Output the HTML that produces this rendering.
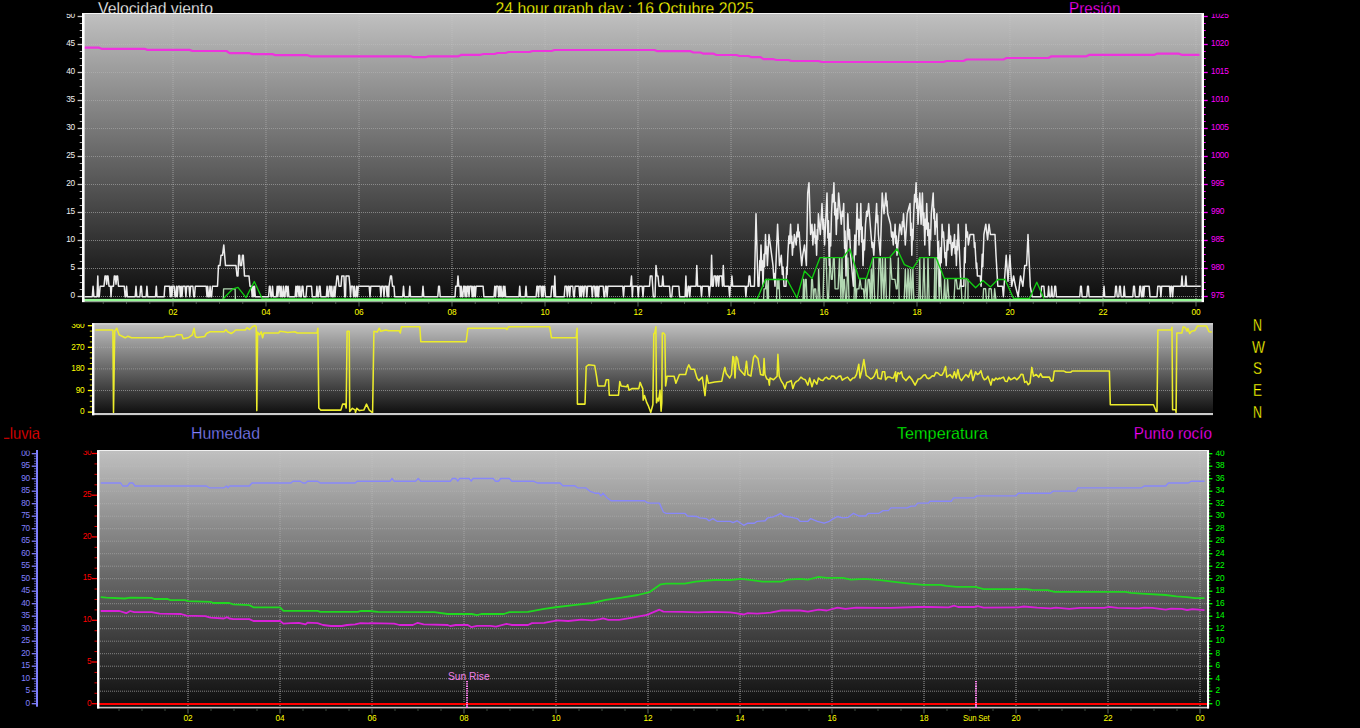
<!DOCTYPE html>
<html lang="es"><head><meta charset="utf-8"><title>24 hour graph</title>
<style>html,body{margin:0;padding:0;background:#000;overflow:hidden}svg{display:block}text{white-space:pre}</style>
</head><body>
<svg width="1360" height="728" viewBox="0 0 1360 728">
<defs>
<linearGradient id="g" x1="0" y1="0" x2="0" y2="1"><stop offset="0" stop-color="#c0c0c0"/><stop offset="1" stop-color="#0c0c0c"/></linearGradient>
<linearGradient id="gv1" gradientUnits="userSpaceOnUse" x1="0" y1="13" x2="0" y2="301"><stop offset="0" stop-color="#dedede" stop-opacity="0.16"/><stop offset="1" stop-color="#dedede" stop-opacity="0.72"/></linearGradient>
<linearGradient id="gv3" gradientUnits="userSpaceOnUse" x1="0" y1="450" x2="0" y2="708"><stop offset="0" stop-color="#dedede" stop-opacity="0.16"/><stop offset="1" stop-color="#dedede" stop-opacity="0.72"/></linearGradient>
</defs>
<rect x="0" y="0" width="1360" height="728" fill="#000" />
<g font-family="'Liberation Sans', sans-serif" font-size="16.6" stroke="#000" stroke-width="0.28">
<text x="98" y="13.6" fill="#ffffff" textLength="115.0" lengthAdjust="spacingAndGlyphs">Velocidad viento</text>
<text x="495.5" y="13.6" fill="#ffff00" textLength="258.3" lengthAdjust="spacingAndGlyphs">24 hour graph day : 16 Octubre 2025</text>
<text x="1069" y="13.6" fill="#ff00ff" textLength="51.5" lengthAdjust="spacingAndGlyphs">Presión</text>
<text x="1.5" y="439" fill="#ff0000" textLength="38.5" lengthAdjust="spacingAndGlyphs">Lluvia</text>
<rect x="0" y="424" width="4.0" height="16.5" fill="#000" />
<rect x="0" y="424" width="5.3" height="13.3" fill="#000" />
<text x="191" y="439" fill="#8080ff" textLength="69.0" lengthAdjust="spacingAndGlyphs">Humedad</text>
<text x="897" y="439" fill="#00ff00" textLength="91.0" lengthAdjust="spacingAndGlyphs">Temperatura</text>
<text x="1133.8" y="439" fill="#ff00ff" textLength="78.2" lengthAdjust="spacingAndGlyphs">Punto rocío</text>
</g>
<g font-family="'Liberation Sans', sans-serif" font-size="8.3" letter-spacing="-0.2">
<text x="75" y="298.35" fill="#f0f0f0" font-size="8.3" text-anchor="end" >0</text>
<text x="75" y="270.35" fill="#f0f0f0" font-size="8.3" text-anchor="end" >5</text>
<text x="75" y="242.35" fill="#f0f0f0" font-size="8.3" text-anchor="end" >10</text>
<text x="75" y="214.35" fill="#f0f0f0" font-size="8.3" text-anchor="end" >15</text>
<text x="75" y="186.35" fill="#f0f0f0" font-size="8.3" text-anchor="end" >20</text>
<text x="75" y="158.35" fill="#f0f0f0" font-size="8.3" text-anchor="end" >25</text>
<text x="75" y="130.35" fill="#f0f0f0" font-size="8.3" text-anchor="end" >30</text>
<text x="75" y="102.35" fill="#f0f0f0" font-size="8.3" text-anchor="end" >35</text>
<text x="75" y="74.35" fill="#f0f0f0" font-size="8.3" text-anchor="end" >40</text>
<text x="75" y="46.35000000000003" fill="#f0f0f0" font-size="8.3" text-anchor="end" >45</text>
<text x="75" y="18.35" fill="#f0f0f0" font-size="8.3" text-anchor="end" >50</text>
<text x="1211" y="298.35" fill="#ff00ff" font-size="8.3" text-anchor="start" >975</text>
<text x="1211" y="270.35" fill="#ff00ff" font-size="8.3" text-anchor="start" >980</text>
<text x="1211" y="242.35" fill="#ff00ff" font-size="8.3" text-anchor="start" >985</text>
<text x="1211" y="214.35" fill="#ff00ff" font-size="8.3" text-anchor="start" >990</text>
<text x="1211" y="186.35" fill="#ff00ff" font-size="8.3" text-anchor="start" >995</text>
<text x="1211" y="158.35" fill="#ff00ff" font-size="8.3" text-anchor="start" >1000</text>
<text x="1211" y="130.35" fill="#ff00ff" font-size="8.3" text-anchor="start" >1005</text>
<text x="1211" y="102.35" fill="#ff00ff" font-size="8.3" text-anchor="start" >1010</text>
<text x="1211" y="74.35" fill="#ff00ff" font-size="8.3" text-anchor="start" >1015</text>
<text x="1211" y="46.35000000000003" fill="#ff00ff" font-size="8.3" text-anchor="start" >1020</text>
<text x="1211" y="18.35" fill="#ff00ff" font-size="8.3" text-anchor="start" >1025</text>
</g>
<rect x="0" y="0" width="82" height="13.8" fill="#000" />
<rect x="1204" y="0" width="156" height="13.8" fill="#000" />
<rect x="82" y="13" width="1122" height="288.5" fill="url(#g)" />
<line x1="77.6" y1="296.5" x2="82" y2="296.5" stroke="#c8c8c8" stroke-width="1.3" />
<line x1="1203" y1="296.5" x2="1207.7" y2="296.5" stroke="#ff00ff" stroke-width="1.3" />
<line x1="79.7" y1="289.5" x2="82" y2="289.5" stroke="#b0b0b0" stroke-width="1" />
<line x1="1203" y1="289.5" x2="1205.7" y2="289.5" stroke="#ff00ff" stroke-width="1" />
<line x1="79.7" y1="282.5" x2="82" y2="282.5" stroke="#b0b0b0" stroke-width="1" />
<line x1="1203" y1="282.5" x2="1205.7" y2="282.5" stroke="#ff00ff" stroke-width="1" />
<line x1="79.7" y1="275.5" x2="82" y2="275.5" stroke="#b0b0b0" stroke-width="1" />
<line x1="1203" y1="275.5" x2="1205.7" y2="275.5" stroke="#ff00ff" stroke-width="1" />
<line x1="77.6" y1="268.5" x2="82" y2="268.5" stroke="#c8c8c8" stroke-width="1.3" />
<line x1="1203" y1="268.5" x2="1207.7" y2="268.5" stroke="#ff00ff" stroke-width="1.3" />
<line x1="79.7" y1="261.5" x2="82" y2="261.5" stroke="#b0b0b0" stroke-width="1" />
<line x1="1203" y1="261.5" x2="1205.7" y2="261.5" stroke="#ff00ff" stroke-width="1" />
<line x1="79.7" y1="254.5" x2="82" y2="254.5" stroke="#b0b0b0" stroke-width="1" />
<line x1="1203" y1="254.5" x2="1205.7" y2="254.5" stroke="#ff00ff" stroke-width="1" />
<line x1="79.7" y1="247.5" x2="82" y2="247.5" stroke="#b0b0b0" stroke-width="1" />
<line x1="1203" y1="247.5" x2="1205.7" y2="247.5" stroke="#ff00ff" stroke-width="1" />
<line x1="77.6" y1="240.5" x2="82" y2="240.5" stroke="#c8c8c8" stroke-width="1.3" />
<line x1="1203" y1="240.5" x2="1207.7" y2="240.5" stroke="#ff00ff" stroke-width="1.3" />
<line x1="79.7" y1="233.5" x2="82" y2="233.5" stroke="#b0b0b0" stroke-width="1" />
<line x1="1203" y1="233.5" x2="1205.7" y2="233.5" stroke="#ff00ff" stroke-width="1" />
<line x1="79.7" y1="226.5" x2="82" y2="226.5" stroke="#b0b0b0" stroke-width="1" />
<line x1="1203" y1="226.5" x2="1205.7" y2="226.5" stroke="#ff00ff" stroke-width="1" />
<line x1="79.7" y1="219.5" x2="82" y2="219.5" stroke="#b0b0b0" stroke-width="1" />
<line x1="1203" y1="219.5" x2="1205.7" y2="219.5" stroke="#ff00ff" stroke-width="1" />
<line x1="77.6" y1="212.5" x2="82" y2="212.5" stroke="#c8c8c8" stroke-width="1.3" />
<line x1="1203" y1="212.5" x2="1207.7" y2="212.5" stroke="#ff00ff" stroke-width="1.3" />
<line x1="79.7" y1="205.5" x2="82" y2="205.5" stroke="#b0b0b0" stroke-width="1" />
<line x1="1203" y1="205.5" x2="1205.7" y2="205.5" stroke="#ff00ff" stroke-width="1" />
<line x1="79.7" y1="198.5" x2="82" y2="198.5" stroke="#b0b0b0" stroke-width="1" />
<line x1="1203" y1="198.5" x2="1205.7" y2="198.5" stroke="#ff00ff" stroke-width="1" />
<line x1="79.7" y1="191.5" x2="82" y2="191.5" stroke="#b0b0b0" stroke-width="1" />
<line x1="1203" y1="191.5" x2="1205.7" y2="191.5" stroke="#ff00ff" stroke-width="1" />
<line x1="77.6" y1="184.5" x2="82" y2="184.5" stroke="#c8c8c8" stroke-width="1.3" />
<line x1="1203" y1="184.5" x2="1207.7" y2="184.5" stroke="#ff00ff" stroke-width="1.3" />
<line x1="79.7" y1="177.5" x2="82" y2="177.5" stroke="#b0b0b0" stroke-width="1" />
<line x1="1203" y1="177.5" x2="1205.7" y2="177.5" stroke="#ff00ff" stroke-width="1" />
<line x1="79.7" y1="170.5" x2="82" y2="170.5" stroke="#b0b0b0" stroke-width="1" />
<line x1="1203" y1="170.5" x2="1205.7" y2="170.5" stroke="#ff00ff" stroke-width="1" />
<line x1="79.7" y1="163.5" x2="82" y2="163.5" stroke="#b0b0b0" stroke-width="1" />
<line x1="1203" y1="163.5" x2="1205.7" y2="163.5" stroke="#ff00ff" stroke-width="1" />
<line x1="77.6" y1="156.5" x2="82" y2="156.5" stroke="#c8c8c8" stroke-width="1.3" />
<line x1="1203" y1="156.5" x2="1207.7" y2="156.5" stroke="#ff00ff" stroke-width="1.3" />
<line x1="79.7" y1="149.5" x2="82" y2="149.5" stroke="#b0b0b0" stroke-width="1" />
<line x1="1203" y1="149.5" x2="1205.7" y2="149.5" stroke="#ff00ff" stroke-width="1" />
<line x1="79.7" y1="142.5" x2="82" y2="142.5" stroke="#b0b0b0" stroke-width="1" />
<line x1="1203" y1="142.5" x2="1205.7" y2="142.5" stroke="#ff00ff" stroke-width="1" />
<line x1="79.7" y1="135.5" x2="82" y2="135.5" stroke="#b0b0b0" stroke-width="1" />
<line x1="1203" y1="135.5" x2="1205.7" y2="135.5" stroke="#ff00ff" stroke-width="1" />
<line x1="77.6" y1="128.5" x2="82" y2="128.5" stroke="#c8c8c8" stroke-width="1.3" />
<line x1="1203" y1="128.5" x2="1207.7" y2="128.5" stroke="#ff00ff" stroke-width="1.3" />
<line x1="79.7" y1="121.5" x2="82" y2="121.5" stroke="#b0b0b0" stroke-width="1" />
<line x1="1203" y1="121.5" x2="1205.7" y2="121.5" stroke="#ff00ff" stroke-width="1" />
<line x1="79.7" y1="114.5" x2="82" y2="114.5" stroke="#b0b0b0" stroke-width="1" />
<line x1="1203" y1="114.5" x2="1205.7" y2="114.5" stroke="#ff00ff" stroke-width="1" />
<line x1="79.7" y1="107.5" x2="82" y2="107.5" stroke="#b0b0b0" stroke-width="1" />
<line x1="1203" y1="107.5" x2="1205.7" y2="107.5" stroke="#ff00ff" stroke-width="1" />
<line x1="77.6" y1="100.5" x2="82" y2="100.5" stroke="#c8c8c8" stroke-width="1.3" />
<line x1="1203" y1="100.5" x2="1207.7" y2="100.5" stroke="#ff00ff" stroke-width="1.3" />
<line x1="79.7" y1="93.5" x2="82" y2="93.5" stroke="#b0b0b0" stroke-width="1" />
<line x1="1203" y1="93.5" x2="1205.7" y2="93.5" stroke="#ff00ff" stroke-width="1" />
<line x1="79.7" y1="86.5" x2="82" y2="86.5" stroke="#b0b0b0" stroke-width="1" />
<line x1="1203" y1="86.5" x2="1205.7" y2="86.5" stroke="#ff00ff" stroke-width="1" />
<line x1="79.7" y1="79.5" x2="82" y2="79.5" stroke="#b0b0b0" stroke-width="1" />
<line x1="1203" y1="79.5" x2="1205.7" y2="79.5" stroke="#ff00ff" stroke-width="1" />
<line x1="77.6" y1="72.5" x2="82" y2="72.5" stroke="#c8c8c8" stroke-width="1.3" />
<line x1="1203" y1="72.5" x2="1207.7" y2="72.5" stroke="#ff00ff" stroke-width="1.3" />
<line x1="79.7" y1="65.50000000000003" x2="82" y2="65.50000000000003" stroke="#b0b0b0" stroke-width="1" />
<line x1="1203" y1="65.50000000000003" x2="1205.7" y2="65.50000000000003" stroke="#ff00ff" stroke-width="1" />
<line x1="79.7" y1="58.50000000000003" x2="82" y2="58.50000000000003" stroke="#b0b0b0" stroke-width="1" />
<line x1="1203" y1="58.50000000000003" x2="1205.7" y2="58.50000000000003" stroke="#ff00ff" stroke-width="1" />
<line x1="79.7" y1="51.50000000000003" x2="82" y2="51.50000000000003" stroke="#b0b0b0" stroke-width="1" />
<line x1="1203" y1="51.50000000000003" x2="1205.7" y2="51.50000000000003" stroke="#ff00ff" stroke-width="1" />
<line x1="77.6" y1="44.50000000000003" x2="82" y2="44.50000000000003" stroke="#c8c8c8" stroke-width="1.3" />
<line x1="1203" y1="44.50000000000003" x2="1207.7" y2="44.50000000000003" stroke="#ff00ff" stroke-width="1.3" />
<line x1="79.7" y1="37.5" x2="82" y2="37.5" stroke="#b0b0b0" stroke-width="1" />
<line x1="1203" y1="37.5" x2="1205.7" y2="37.5" stroke="#ff00ff" stroke-width="1" />
<line x1="79.7" y1="30.5" x2="82" y2="30.5" stroke="#b0b0b0" stroke-width="1" />
<line x1="1203" y1="30.5" x2="1205.7" y2="30.5" stroke="#ff00ff" stroke-width="1" />
<line x1="79.7" y1="23.5" x2="82" y2="23.5" stroke="#b0b0b0" stroke-width="1" />
<line x1="1203" y1="23.5" x2="1205.7" y2="23.5" stroke="#ff00ff" stroke-width="1" />
<line x1="77.6" y1="16.5" x2="82" y2="16.5" stroke="#c8c8c8" stroke-width="1.3" />
<line x1="1203" y1="16.5" x2="1207.7" y2="16.5" stroke="#ff00ff" stroke-width="1.3" />
<line x1="85" y1="296.5" x2="1202" y2="296.5" stroke="#dedede" stroke-width="1" stroke-dasharray="1 1" opacity="0.55"/>
<line x1="85" y1="268.5" x2="1202" y2="268.5" stroke="#dedede" stroke-width="1" stroke-dasharray="1 1" opacity="0.51"/>
<line x1="85" y1="240.5" x2="1202" y2="240.5" stroke="#dedede" stroke-width="1" stroke-dasharray="1 1" opacity="0.47"/>
<line x1="85" y1="212.5" x2="1202" y2="212.5" stroke="#dedede" stroke-width="1" stroke-dasharray="1 1" opacity="0.43"/>
<line x1="85" y1="184.5" x2="1202" y2="184.5" stroke="#dedede" stroke-width="1" stroke-dasharray="1 1" opacity="0.39"/>
<line x1="85" y1="156.5" x2="1202" y2="156.5" stroke="#dedede" stroke-width="1" stroke-dasharray="1 1" opacity="0.35"/>
<line x1="85" y1="128.5" x2="1202" y2="128.5" stroke="#dedede" stroke-width="1" stroke-dasharray="1 1" opacity="0.31"/>
<line x1="85" y1="100.5" x2="1202" y2="100.5" stroke="#dedede" stroke-width="1" stroke-dasharray="1 1" opacity="0.27"/>
<line x1="85" y1="72.5" x2="1202" y2="72.5" stroke="#dedede" stroke-width="1" stroke-dasharray="1 1" opacity="0.23"/>
<line x1="85" y1="44.50000000000003" x2="1202" y2="44.50000000000003" stroke="#dedede" stroke-width="1" stroke-dasharray="1 1" opacity="0.19"/>
<line x1="85" y1="16.5" x2="1202" y2="16.5" stroke="#dedede" stroke-width="1" stroke-dasharray="1 1" opacity="0.15"/>
<line x1="173" y1="14" x2="173" y2="299" stroke="url(#gv1)" stroke-width="1" stroke-dasharray="1 1"/>
<line x1="266" y1="14" x2="266" y2="299" stroke="url(#gv1)" stroke-width="1" stroke-dasharray="1 1"/>
<line x1="359" y1="14" x2="359" y2="299" stroke="url(#gv1)" stroke-width="1" stroke-dasharray="1 1"/>
<line x1="452" y1="14" x2="452" y2="299" stroke="url(#gv1)" stroke-width="1" stroke-dasharray="1 1"/>
<line x1="545" y1="14" x2="545" y2="299" stroke="url(#gv1)" stroke-width="1" stroke-dasharray="1 1"/>
<line x1="638" y1="14" x2="638" y2="299" stroke="url(#gv1)" stroke-width="1" stroke-dasharray="1 1"/>
<line x1="731" y1="14" x2="731" y2="299" stroke="url(#gv1)" stroke-width="1" stroke-dasharray="1 1"/>
<line x1="824" y1="14" x2="824" y2="299" stroke="url(#gv1)" stroke-width="1" stroke-dasharray="1 1"/>
<line x1="917" y1="14" x2="917" y2="299" stroke="url(#gv1)" stroke-width="1" stroke-dasharray="1 1"/>
<line x1="1010" y1="14" x2="1010" y2="299" stroke="url(#gv1)" stroke-width="1" stroke-dasharray="1 1"/>
<line x1="1103" y1="14" x2="1103" y2="299" stroke="url(#gv1)" stroke-width="1" stroke-dasharray="1 1"/>
<line x1="1196" y1="14" x2="1196" y2="299" stroke="url(#gv1)" stroke-width="1" stroke-dasharray="1 1"/>
<g font-family="'Liberation Sans', sans-serif" font-size="8.3" letter-spacing="-0.2">
<text x="173" y="314.6" fill="#ffff00" font-size="8.3" text-anchor="middle" >02</text>
<text x="266" y="314.6" fill="#ffff00" font-size="8.3" text-anchor="middle" >04</text>
<text x="359" y="314.6" fill="#ffff00" font-size="8.3" text-anchor="middle" >06</text>
<text x="452" y="314.6" fill="#ffff00" font-size="8.3" text-anchor="middle" >08</text>
<text x="545" y="314.6" fill="#ffff00" font-size="8.3" text-anchor="middle" >10</text>
<text x="638" y="314.6" fill="#ffff00" font-size="8.3" text-anchor="middle" >12</text>
<text x="731" y="314.6" fill="#ffff00" font-size="8.3" text-anchor="middle" >14</text>
<text x="824" y="314.6" fill="#ffff00" font-size="8.3" text-anchor="middle" >16</text>
<text x="917" y="314.6" fill="#ffff00" font-size="8.3" text-anchor="middle" >18</text>
<text x="1010" y="314.6" fill="#ffff00" font-size="8.3" text-anchor="middle" >20</text>
<text x="1103" y="314.6" fill="#ffff00" font-size="8.3" text-anchor="middle" >22</text>
<text x="1196" y="314.6" fill="#ffff00" font-size="8.3" text-anchor="middle" >00</text>
</g>
<line x1="103.25" y1="302" x2="103.25" y2="304" stroke="#3c483c" stroke-width="1" />
<line x1="126.5" y1="302" x2="126.5" y2="304" stroke="#3c483c" stroke-width="1" />
<line x1="149.75" y1="302" x2="149.75" y2="304" stroke="#3c483c" stroke-width="1" />
<line x1="173.0" y1="302" x2="173.0" y2="306.5" stroke="#5c6c5c" stroke-width="1" />
<line x1="196.25" y1="302" x2="196.25" y2="304" stroke="#3c483c" stroke-width="1" />
<line x1="219.5" y1="302" x2="219.5" y2="304" stroke="#3c483c" stroke-width="1" />
<line x1="242.75" y1="302" x2="242.75" y2="304" stroke="#3c483c" stroke-width="1" />
<line x1="266.0" y1="302" x2="266.0" y2="306.5" stroke="#5c6c5c" stroke-width="1" />
<line x1="289.25" y1="302" x2="289.25" y2="304" stroke="#3c483c" stroke-width="1" />
<line x1="312.5" y1="302" x2="312.5" y2="304" stroke="#3c483c" stroke-width="1" />
<line x1="335.75" y1="302" x2="335.75" y2="304" stroke="#3c483c" stroke-width="1" />
<line x1="359.0" y1="302" x2="359.0" y2="306.5" stroke="#5c6c5c" stroke-width="1" />
<line x1="382.25" y1="302" x2="382.25" y2="304" stroke="#3c483c" stroke-width="1" />
<line x1="405.5" y1="302" x2="405.5" y2="304" stroke="#3c483c" stroke-width="1" />
<line x1="428.75" y1="302" x2="428.75" y2="304" stroke="#3c483c" stroke-width="1" />
<line x1="452.0" y1="302" x2="452.0" y2="306.5" stroke="#5c6c5c" stroke-width="1" />
<line x1="475.25" y1="302" x2="475.25" y2="304" stroke="#3c483c" stroke-width="1" />
<line x1="498.5" y1="302" x2="498.5" y2="304" stroke="#3c483c" stroke-width="1" />
<line x1="521.75" y1="302" x2="521.75" y2="304" stroke="#3c483c" stroke-width="1" />
<line x1="545.0" y1="302" x2="545.0" y2="306.5" stroke="#5c6c5c" stroke-width="1" />
<line x1="568.25" y1="302" x2="568.25" y2="304" stroke="#3c483c" stroke-width="1" />
<line x1="591.5" y1="302" x2="591.5" y2="304" stroke="#3c483c" stroke-width="1" />
<line x1="614.75" y1="302" x2="614.75" y2="304" stroke="#3c483c" stroke-width="1" />
<line x1="638.0" y1="302" x2="638.0" y2="306.5" stroke="#5c6c5c" stroke-width="1" />
<line x1="661.25" y1="302" x2="661.25" y2="304" stroke="#3c483c" stroke-width="1" />
<line x1="684.5" y1="302" x2="684.5" y2="304" stroke="#3c483c" stroke-width="1" />
<line x1="707.75" y1="302" x2="707.75" y2="304" stroke="#3c483c" stroke-width="1" />
<line x1="731.0" y1="302" x2="731.0" y2="306.5" stroke="#5c6c5c" stroke-width="1" />
<line x1="754.25" y1="302" x2="754.25" y2="304" stroke="#3c483c" stroke-width="1" />
<line x1="777.5" y1="302" x2="777.5" y2="304" stroke="#3c483c" stroke-width="1" />
<line x1="800.75" y1="302" x2="800.75" y2="304" stroke="#3c483c" stroke-width="1" />
<line x1="824.0" y1="302" x2="824.0" y2="306.5" stroke="#5c6c5c" stroke-width="1" />
<line x1="847.25" y1="302" x2="847.25" y2="304" stroke="#3c483c" stroke-width="1" />
<line x1="870.5" y1="302" x2="870.5" y2="304" stroke="#3c483c" stroke-width="1" />
<line x1="893.75" y1="302" x2="893.75" y2="304" stroke="#3c483c" stroke-width="1" />
<line x1="917.0" y1="302" x2="917.0" y2="306.5" stroke="#5c6c5c" stroke-width="1" />
<line x1="940.25" y1="302" x2="940.25" y2="304" stroke="#3c483c" stroke-width="1" />
<line x1="963.5" y1="302" x2="963.5" y2="304" stroke="#3c483c" stroke-width="1" />
<line x1="986.75" y1="302" x2="986.75" y2="304" stroke="#3c483c" stroke-width="1" />
<line x1="1010.0" y1="302" x2="1010.0" y2="306.5" stroke="#5c6c5c" stroke-width="1" />
<line x1="1033.25" y1="302" x2="1033.25" y2="304" stroke="#3c483c" stroke-width="1" />
<line x1="1056.5" y1="302" x2="1056.5" y2="304" stroke="#3c483c" stroke-width="1" />
<line x1="1079.75" y1="302" x2="1079.75" y2="304" stroke="#3c483c" stroke-width="1" />
<line x1="1103.0" y1="302" x2="1103.0" y2="306.5" stroke="#5c6c5c" stroke-width="1" />
<line x1="1126.25" y1="302" x2="1126.25" y2="304" stroke="#3c483c" stroke-width="1" />
<line x1="1149.5" y1="302" x2="1149.5" y2="304" stroke="#3c483c" stroke-width="1" />
<line x1="1172.75" y1="302" x2="1172.75" y2="304" stroke="#3c483c" stroke-width="1" />
<line x1="1196.0" y1="302" x2="1196.0" y2="306.5" stroke="#5c6c5c" stroke-width="1" />
<polyline points="84.0,47.6 98.5,47.6 101.5,48.8 144.5,48.8 147.5,49.9 189.5,49.9 192.5,51.0 226.5,51.0 229.5,53.2 249.5,53.2 252.5,54.1 272.5,54.1 275.5,55.2 307.5,55.2 310.5,56.3 410.5,56.3 413.5,57.2 425.5,57.2 428.5,56.3 458.5,56.3 461.5,54.8 480.5,54.8 483.5,54.0 494.5,54.0 497.5,53.0 505.5,53.0 508.5,52.0 529.5,52.0 532.5,51.0 551.5,51.0 554.5,50.0 654.5,50.0 657.5,51.2 690.5,51.2 693.5,52.5 700.5,52.5 703.5,53.7 713.5,53.7 716.5,55.0 736.5,55.0 739.5,56.0 748.5,56.0 751.5,57.2 760.5,57.2 763.5,59.2 773.5,59.2 776.5,60.0 788.5,60.0 791.5,61.0 818.5,61.0 821.5,62.0 943.5,62.0 946.5,61.0 963.5,61.0 966.5,59.5 1003.5,59.5 1006.5,58.0 1048.5,58.0 1051.5,56.3 1086.5,56.3 1089.5,54.8 1154.5,54.8 1157.5,53.6 1178.5,53.6 1181.5,54.8 1199.5,54.8" fill="none" stroke="#ee33dd" stroke-width="2.2" stroke-linejoin="round" />
<polyline points="223.3,300.0 223.6,288.8 235.1,288.8 235.4,300.0" fill="none" stroke="#c0e8c0" stroke-width="1.35" stroke-linejoin="round" opacity="0.92"/>
<polyline points="763.5,300.0 764.1,288.8 765.5,288.8 766.4,279.3 767.3,300.0 768.4,279.3 768.5,300.0" fill="none" stroke="#c0e8c0" stroke-width="1.35" stroke-linejoin="round" opacity="0.92"/>
<polyline points="776.5,300.0 777.1,279.3 778.0,288.8 778.9,279.3 779.8,300.0" fill="none" stroke="#c0e8c0" stroke-width="1.35" stroke-linejoin="round" opacity="0.92"/>
<polyline points="803.0,300.0 803.6,279.3 804.5,300.0 805.4,279.3 806.2,279.3 807.0,300.0" fill="none" stroke="#c0e8c0" stroke-width="1.35" stroke-linejoin="round" opacity="0.92"/>
<polyline points="811.0,300.0 811.6,279.3 812.4,279.3 813.5,300.0 814.4,288.8 815.6,288.8 816.5,300.0" fill="none" stroke="#c0e8c0" stroke-width="1.35" stroke-linejoin="round" opacity="0.92"/>
<polyline points="818.0,300.0 818.6,269.5 820.0,300.0 823.0,300.0 824.1,258.0 826.1,258.0 827.5,300.0 828.5,300.0 829.9,258.0 831.3,279.3 832.3,279.3 833.4,258.0 834.2,258.0 835.1,288.8 838.1,288.8 839.5,258.0 840.9,300.0 842.0,258.0 842.9,300.0 844.0,279.3 844.4,279.3 845.5,300.0 846.5,300.0 847.9,258.0 849.0,300.0 854.0,300.0 854.9,269.5 856.0,300.0 856.9,288.8 858.9,288.8 860.0,279.3 861.4,288.8 863.4,288.8 864.5,300.0 865.6,279.3 867.0,300.0 868.1,279.3 869.3,279.3 870.4,300.0 871.3,269.5 872.2,300.0 873.3,258.0 874.7,300.0 877.7,300.0 879.1,258.0 880.3,258.0 881.4,300.0 882.5,258.0 883.9,300.0 885.3,258.0 886.4,300.0 889.4,300.0 890.5,258.0 891.9,279.3 894.9,279.3 896.3,288.8 897.2,288.8 898.3,258.0 899.2,300.0 904.2,300.0 905.3,269.5 906.7,300.0 908.1,269.5 909.2,300.0 910.6,269.5 911.5,300.0 912.9,269.5 913.8,300.0 918.8,300.0 919.7,258.0 920.6,300.0 922.6,300.0 924.0,258.0 925.1,300.0 927.1,300.0 928.0,258.0 929.1,300.0 934.1,300.0 935.0,258.0 935.0,300.0" fill="none" stroke="#c0e8c0" stroke-width="1.35" stroke-linejoin="round" opacity="0.92"/>
<polyline points="936.0,300.0 936.6,258.0 937.8,258.0 939.2,300.0 940.3,269.5 941.7,300.0 943.7,300.0 944.6,279.3 945.5,300.0 946.5,300.0 947.6,279.3 949.0,300.0 954.0,300.0 955.1,279.3 956.3,279.3 957.4,288.8 959.4,288.8 960.8,279.3 961.9,300.0 964.9,300.0 966.0,279.3 968.0,279.3 968.0,300.0" fill="none" stroke="#c0e8c0" stroke-width="1.35" stroke-linejoin="round" opacity="0.92"/>
<polyline points="983.0,300.0 983.6,288.7 985.6,288.7 986.5,300.0 986.7,300.0" fill="none" stroke="#c0e8c0" stroke-width="1.35" stroke-linejoin="round" opacity="0.92"/>
<polyline points="988.5,300.0 989.1,288.7 990.3,288.7 991.2,288.8 992.0,300.0" fill="none" stroke="#c0e8c0" stroke-width="1.35" stroke-linejoin="round" opacity="0.92"/>
<polyline points="994.0,300.0 994.6,288.7 996.0,300.0" fill="none" stroke="#c0e8c0" stroke-width="1.35" stroke-linejoin="round" opacity="0.92"/>
<polyline points="84.5,296.7 85.3,296.7 86.1,296.7 86.8,296.7 87.6,296.7 88.4,296.7 89.2,296.7 90.0,296.7 90.7,296.7 91.5,296.7 92.3,296.7 93.1,286.3 93.9,296.7 94.6,296.7 95.4,296.7 96.2,296.7 97.0,296.7 97.8,276.0 98.5,296.7 99.3,296.7 100.1,286.3 100.9,286.3 101.7,286.3 102.4,286.3 103.2,286.3 104.0,286.3 105.0,276.0 106.0,276.0 106.7,284.3 107.3,276.0 108.0,276.0 109.0,286.3 110.5,286.3 111.0,296.7 111.7,286.3 113.5,286.3 114.3,276.0 115.2,276.0 116.0,284.3 116.8,276.0 117.6,276.0 118.5,286.3 121.5,286.3 121.9,286.3 122.7,286.3 123.5,286.3 124.3,286.3 125.1,296.7 125.8,296.7 126.6,286.3 127.4,296.7 128.2,296.7 129.0,296.7 129.7,296.7 130.5,296.7 131.3,296.7 132.1,296.7 132.9,296.7 133.6,296.7 134.4,296.7 135.2,296.7 136.0,286.3 136.8,296.7 137.5,296.7 138.3,296.7 139.1,296.7 139.9,296.7 140.7,286.3 141.4,286.3 142.2,296.7 143.0,296.7 143.8,296.7 144.6,296.7 145.3,296.7 146.1,296.7 146.9,286.3 147.7,296.7 148.5,296.7 149.2,296.7 150.0,296.7 150.8,296.7 151.6,296.7 152.4,296.7 153.1,296.7 153.9,296.7 154.7,296.7 155.5,296.7 156.3,286.3 157.0,296.7 157.8,296.7 158.6,296.7 159.4,296.7 160.2,296.7 160.9,296.7 161.7,296.7 162.5,296.7 163.3,296.7 164.1,296.7 164.8,286.3 165.6,286.3 166.4,286.3 167.2,286.3 168.0,286.3 168.7,286.3 169.5,286.3 170.3,296.7 171.1,286.3 171.9,296.7 172.6,286.3 173.4,286.3 174.2,286.3 175.0,296.7 175.8,296.7 176.5,286.3 177.3,296.7 178.1,286.3 178.9,286.3 179.7,286.3 180.4,296.7 181.2,286.3 182.0,296.7 182.8,286.3 183.6,286.3 184.3,286.3 185.1,286.3 185.9,296.7 186.7,286.3 187.5,286.3 188.2,286.3 189.0,286.3 189.8,296.7 190.6,286.3 191.4,286.3 192.1,286.3 192.9,286.3 193.7,296.7 194.5,296.7 195.3,286.3 196.0,286.3 196.8,286.3 197.6,286.3 198.4,286.3 199.2,286.3 199.9,286.3 200.7,286.3 201.5,286.3 202.3,286.3 203.1,286.3 203.8,286.3 204.6,286.3 205.4,286.3 206.2,286.3 207.0,296.7 207.7,286.3 208.5,296.7 209.3,296.7 210.1,286.3 210.9,296.7 211.6,296.7 212.4,286.3 213.2,286.3 214.0,286.3 214.8,286.3 215.5,286.3 216.3,286.3 217.1,286.3 217.5,286.3 218.5,265.6 220.0,265.6 221.0,255.3 222.5,255.3 223.8,244.9 225.5,265.6 236.0,265.6 237.0,276.0 238.0,276.0 238.8,255.3 239.6,255.3 240.3,265.6 241.5,265.6 242.5,255.3 243.3,255.3 244.5,276.0 249.0,276.0 250.0,286.3 251.0,286.3 251.4,286.3 252.2,296.7 253.0,286.3 253.8,296.7 254.5,286.3 255.3,296.7 256.1,296.7 256.9,296.7 257.7,296.7 258.4,296.7 259.2,296.7 260.0,296.7 260.8,296.7 261.6,296.7 262.3,296.7 263.1,296.7 263.9,296.7 264.7,296.7 265.5,296.7 266.2,296.7 267.0,296.7 267.8,296.7 268.6,296.7 269.4,286.3 270.1,286.3 270.9,296.7 271.7,296.7 272.5,286.3 273.3,296.7 274.0,296.7 274.8,296.7 275.6,296.7 276.4,296.7 277.2,286.3 277.9,296.7 278.7,286.3 279.5,286.3 280.3,296.7 281.1,286.3 281.8,296.7 282.6,296.7 283.4,286.3 284.2,296.7 285.0,296.7 285.7,286.3 286.5,286.3 287.3,296.7 288.1,286.3 288.9,296.7 289.6,296.7 290.4,296.7 291.2,296.7 292.0,296.7 292.8,296.7 293.5,296.7 294.3,296.7 295.1,296.7 295.9,286.3 296.7,296.7 297.4,286.3 298.2,286.3 299.0,296.7 299.8,286.3 300.6,296.7 301.3,296.7 302.1,286.3 302.9,286.3 303.7,296.7 304.5,296.7 305.2,296.7 306.0,296.7 306.8,286.3 307.6,286.3 308.4,286.3 309.1,286.3 309.9,286.3 310.7,286.3 311.5,286.3 312.3,296.7 313.0,296.7 313.8,296.7 314.6,296.7 315.4,296.7 316.2,296.7 316.9,286.3 317.7,296.7 318.5,296.7 319.3,286.3 320.1,286.3 320.8,296.7 321.6,296.7 322.4,296.7 323.2,296.7 324.0,296.7 324.7,296.7 325.5,296.7 326.3,296.7 327.1,286.3 327.9,296.7 328.6,296.7 329.4,286.3 330.2,286.3 331.0,296.7 331.8,286.3 332.5,296.7 333.3,296.7 334.1,286.3 334.9,296.7 335.7,286.3 336.0,286.3 337.0,276.0 338.0,276.0 339.0,286.3 341.0,286.3 341.8,276.0 344.0,276.0 344.7,296.7 345.5,296.7 346.0,276.0 349.0,276.0 350.0,286.3 350.5,296.7 351.3,286.3 352.0,286.3 352.8,286.3 353.6,296.7 354.4,286.3 355.2,296.7 355.9,296.7 356.7,286.3 357.5,296.7 358.3,286.3 359.1,286.3 359.8,286.3 360.6,286.3 361.4,286.3 362.2,286.3 363.0,286.3 363.7,286.3 364.5,286.3 365.3,286.3 366.1,286.3 366.9,286.3 367.6,286.3 368.4,286.3 369.2,286.3 370.0,296.7 370.8,286.3 371.5,286.3 372.3,286.3 373.1,286.3 373.9,286.3 374.7,286.3 375.4,286.3 376.2,286.3 377.0,286.3 377.8,286.3 378.6,286.3 379.3,286.3 380.1,286.3 380.9,296.7 381.7,286.3 382.5,286.3 383.2,286.3 384.0,296.7 384.8,286.3 385.6,286.3 386.4,286.3 387.1,296.7 387.9,286.3 388.7,296.7 389.0,286.3 390.5,276.0 391.5,276.0 392.5,286.3 394.0,286.3 394.7,296.7 394.9,296.7 395.7,296.7 396.5,296.7 397.3,296.7 398.1,296.7 398.8,296.7 399.6,296.7 400.4,296.7 401.2,296.7 402.0,296.7 402.7,296.7 403.5,286.3 404.3,296.7 405.1,296.7 405.9,296.7 406.6,296.7 407.4,296.7 408.2,296.7 409.0,296.7 409.8,286.3 410.5,296.7 411.3,296.7 412.1,296.7 412.9,296.7 413.7,296.7 414.4,296.7 415.2,296.7 416.0,296.7 416.8,296.7 417.6,296.7 418.3,296.7 419.1,296.7 419.9,296.7 420.7,296.7 421.5,296.7 422.2,296.7 423.0,286.3 423.8,296.7 424.6,296.7 425.4,296.7 426.1,296.7 426.9,296.7 427.7,296.7 428.5,296.7 429.3,296.7 430.0,296.7 430.8,296.7 431.6,296.7 432.4,296.7 433.2,296.7 433.9,296.7 434.7,296.7 435.5,296.7 436.3,296.7 437.1,296.7 437.8,296.7 438.6,286.3 439.4,286.3 440.2,296.7 441.0,296.7 441.7,296.7 442.5,296.7 443.3,296.7 444.1,296.7 444.9,296.7 445.6,296.7 446.4,296.7 447.2,296.7 448.0,296.7 448.8,296.7 449.5,296.7 450.3,296.7 451.1,296.7 451.9,296.7 452.7,296.7 453.4,296.7 454.2,296.7 455.0,296.7 455.0,296.7 455.7,286.3 457.3,286.3 458.0,276.0 458.8,286.3 460.0,286.3 460.5,296.7 461.2,286.3 462.0,296.7 462.8,296.7 463.6,286.3 464.4,286.3 465.1,296.7 465.9,286.3 466.7,296.7 467.5,286.3 468.3,286.3 469.0,296.7 469.8,286.3 470.6,286.3 471.4,286.3 472.2,296.7 472.9,286.3 473.7,296.7 474.5,286.3 475.3,296.7 476.1,286.3 476.8,286.3 477.6,286.3 478.4,286.3 479.2,286.3 480.0,286.3 480.7,286.3 481.5,286.3 482.3,286.3 483.1,286.3 483.9,296.7 484.6,296.7 485.4,296.7 486.2,296.7 487.0,296.7 487.8,296.7 488.5,296.7 489.3,296.7 490.1,296.7 490.9,296.7 491.7,296.7 492.4,296.7 493.2,296.7 494.0,296.7 494.8,286.3 495.6,296.7 496.3,286.3 497.1,286.3 497.9,286.3 498.7,296.7 499.5,286.3 500.2,296.7 501.0,286.3 501.8,296.7 502.6,296.7 503.4,286.3 504.1,296.7 504.9,286.3 505.7,296.7 506.5,296.7 507.3,296.7 508.0,296.7 508.8,296.7 509.6,296.7 510.4,296.7 511.2,296.7 511.9,296.7 512.7,296.7 513.5,296.7 514.3,296.7 515.1,296.7 515.8,296.7 516.6,296.7 517.4,296.7 518.2,296.7 519.0,296.7 519.7,286.3 520.5,296.7 521.3,296.7 522.1,296.7 522.9,296.7 523.6,296.7 524.4,296.7 525.2,296.7 526.0,286.3 526.8,296.7 527.5,296.7 528.3,296.7 529.1,296.7 529.9,296.7 530.7,296.7 531.4,296.7 532.2,296.7 533.0,296.7 533.8,296.7 534.6,296.7 535.3,296.7 536.1,296.7 536.9,286.3 537.7,286.3 538.5,296.7 539.2,286.3 540.0,286.3 540.8,286.3 541.6,296.7 542.4,286.3 543.1,296.7 543.9,286.3 544.7,286.3 545.5,296.7 546.3,296.7 547.0,296.7 547.8,296.7 548.6,296.7 549.4,296.7 550.2,296.7 550.9,296.7 551.7,286.3 552.5,286.3 553.3,286.3 554.1,296.7 554.8,276.0 555.6,296.7 556.4,296.7 557.2,296.7 558.0,296.7 558.7,296.7 559.5,296.7 560.3,296.7 561.1,296.7 561.9,296.7 562.6,296.7 563.4,296.7 564.2,296.7 565.0,286.3 565.8,286.3 566.5,286.3 567.3,296.7 568.1,286.3 568.9,286.3 569.7,296.7 570.4,286.3 571.2,286.3 572.0,286.3 572.8,286.3 573.6,296.7 574.3,296.7 575.1,286.3 575.9,286.3 576.7,286.3 577.5,286.3 578.2,286.3 579.0,286.3 579.8,296.7 580.6,286.3 581.4,296.7 582.1,286.3 582.9,286.3 583.7,296.7 584.5,286.3 585.3,286.3 586.0,286.3 586.8,296.7 587.6,286.3 588.4,286.3 589.2,286.3 589.9,286.3 590.7,286.3 591.5,286.3 592.3,296.7 593.1,286.3 593.8,286.3 594.6,286.3 595.4,296.7 596.2,286.3 597.0,296.7 597.7,286.3 598.5,296.7 599.3,286.3 600.1,286.3 600.9,286.3 601.6,286.3 602.4,286.3 603.2,286.3 604.0,296.7 604.8,296.7 605.5,286.3 606.3,286.3 607.1,296.7 607.9,286.3 608.7,286.3 609.4,286.3 610.2,286.3 611.0,286.3 611.8,286.3 612.6,286.3 613.3,286.3 614.1,286.3 614.9,286.3 615.7,286.3 616.5,286.3 617.2,286.3 618.0,286.3 618.8,286.3 619.6,286.3 620.4,286.3 621.1,286.3 621.9,286.3 622.7,286.3 623.5,296.7 624.3,286.3 625.0,286.3 625.8,286.3 626.6,286.3 627.4,286.3 628.2,286.3 628.9,286.3 629.7,286.3 630.5,286.3 630.5,286.3 631.5,276.0 632.3,296.7 633.0,286.3 633.6,286.3 634.4,286.3 635.2,286.3 636.0,286.3 636.7,286.3 637.5,286.3 638.3,296.7 639.1,286.3 639.9,286.3 640.6,286.3 641.4,286.3 642.2,286.3 643.0,296.7 643.8,286.3 644.5,286.3 645.3,286.3 646.1,286.3 646.9,286.3 647.7,286.3 648.4,286.3 649.2,286.3 649.5,286.3 650.3,276.0 652.0,276.0 653.3,296.7 655.0,296.7 656.0,265.6 657.0,276.0 658.0,276.0 659.0,286.3 662.0,286.3 662.8,276.0 663.6,286.3 664.0,286.3 664.8,286.3 665.6,286.3 666.4,286.3 667.2,286.3 667.9,286.3 668.7,286.3 669.5,286.3 670.3,296.7 671.1,296.7 671.8,296.7 672.6,286.3 673.4,286.3 674.2,286.3 675.0,286.3 675.7,286.3 676.5,286.3 677.3,286.3 678.1,286.3 678.9,286.3 679.6,296.7 680.4,296.7 681.2,296.7 682.0,296.7 682.8,296.7 683.5,296.7 684.3,296.7 685.1,296.7 685.9,276.0 686.7,296.7 687.4,296.7 688.2,286.3 689.0,286.3 689.8,296.7 690.6,286.3 691.3,286.3 692.1,286.3 692.9,286.3 693.7,286.3 694.5,286.3 695.2,286.3 696.0,286.3 696.8,265.6 697.6,286.3 698.4,286.3 699.1,286.3 699.9,286.3 700.7,286.3 701.5,296.7 702.3,286.3 703.0,286.3 703.8,286.3 704.6,286.3 705.4,286.3 706.2,286.3 706.9,286.3 707.7,286.3 708.5,286.3 709.3,296.7 710.1,286.3 710.8,286.3 711.6,255.3 712.4,286.3 713.2,286.3 714.0,276.0 714.7,276.0 715.5,276.0 716.3,286.3 717.1,276.0 717.9,276.0 718.6,286.3 719.4,276.0 720.2,276.0 721.0,276.0 721.8,276.0 722.5,286.3 723.3,265.6 724.1,286.3 724.9,286.3 725.7,286.3 726.4,286.3 727.2,286.3 728.0,286.3 728.8,286.3 729.6,296.7 730.3,286.3 731.1,286.3 731.9,276.0 732.7,286.3 733.5,286.3 734.2,286.3 735.0,286.3 735.8,286.3 736.6,286.3 737.4,286.3 738.1,286.3 738.9,286.3 739.7,286.3 740.5,286.3 741.3,286.3 742.0,286.3 742.8,286.3 743.6,286.3 744.4,286.3 745.2,286.3 745.9,296.7 746.7,286.3 747.5,286.3 748.3,286.3 749.1,276.0 749.8,276.0 750.6,286.3 751.4,286.3 752.2,286.3 753.0,286.3 753.7,286.3 754.4,286.3 756.0,213.8 758.0,286.3 759.0,286.3 759.8,260.6 760.2,270.6 761.0,244.9 761.8,270.6 762.2,260.6 763.0,286.3 764.0,254.2 764.5,266.7 765.5,234.5 766.2,253.8 766.7,246.4 767.4,265.6 769.0,234.5 771.0,250.1 773.0,265.6 773.8,278.5 774.2,273.5 775.0,286.3 777.6,224.2 779.5,265.6 781.3,255.3 782.3,274.5 783.0,267.1 784.0,286.3 786.0,286.3 786.7,267.1 787.1,274.5 787.8,255.3 788.9,236.0 789.5,243.4 790.6,224.2 791.3,243.4 791.7,236.0 792.4,255.3 793.1,242.4 793.6,247.4 794.3,234.5 796.2,244.9 796.9,232.1 797.3,237.0 798.0,224.2 798.8,237.0 799.2,232.1 800.0,244.9 801.7,265.6 802.7,255.3 804.5,244.9 806.4,265.6 807.7,193.1 809.0,182.7 810.6,234.5 812.0,224.2 812.9,244.9 813.6,232.1 814.0,237.0 814.7,224.2 815.4,243.4 815.9,236.0 816.6,255.3 817.3,229.6 817.7,239.5 818.4,213.8 820.3,234.5 822.0,203.5 823.0,229.2 823.6,219.2 824.6,244.9 827.0,193.1 827.9,238.1 828.4,220.7 829.3,265.6 830.1,233.5 830.7,245.9 831.5,213.8 832.4,194.6 833.0,202.0 833.9,182.7 834.8,214.9 835.4,202.4 836.3,234.5 837.2,208.8 837.7,218.8 838.6,193.1 841.3,224.2 842.2,211.3 842.8,216.3 843.7,203.5 844.6,248.4 845.1,231.0 846.0,276.0 847.8,213.8 848.9,239.5 849.5,229.6 850.6,255.3 853.4,286.3 854.8,235.0 855.7,254.8 857.1,203.5 857.8,229.2 858.3,219.2 859.0,244.9 859.7,219.2 860.1,229.2 860.8,203.5 861.6,242.0 862.2,227.1 863.0,265.6 864.0,239.9 864.5,249.9 865.5,224.2 866.7,211.3 867.4,216.3 868.6,203.5 871.0,234.5 872.1,247.4 872.7,242.4 873.8,255.3 876.6,203.5 877.3,222.7 877.7,215.3 878.4,234.5 880.3,255.3 882.2,193.1 884.0,213.8 885.9,193.1 886.6,205.9 887.0,201.0 887.7,213.8 890.5,224.2 891.6,237.0 892.2,232.1 893.3,244.9 894.0,232.1 894.4,237.0 895.1,224.2 895.8,243.4 896.3,236.0 897.0,255.3 899.8,224.2 901.6,234.5 902.3,221.7 902.8,226.7 903.5,213.8 905.3,244.9 907.2,213.8 910.0,203.5 910.7,235.6 911.1,223.1 911.8,255.3 912.5,229.6 913.0,239.5 913.7,213.8 914.6,194.6 915.2,202.0 916.1,182.7 916.8,208.4 917.3,198.5 918.0,224.2 919.8,193.1 921.1,224.2 922.4,193.1 923.3,225.2 923.9,212.8 924.8,244.9 925.5,219.2 926.0,229.2 926.7,203.5 927.8,235.6 928.4,223.1 929.5,255.3 930.2,229.6 930.6,239.5 931.3,213.8 933.2,193.1 933.9,218.8 934.3,208.8 935.0,234.5 935.7,221.7 936.2,226.7 936.9,213.8 938.0,258.8 938.6,241.4 939.7,286.3 940.6,247.8 941.2,262.7 942.1,224.2 942.9,237.0 943.5,232.1 944.3,244.9 945.0,257.7 945.5,252.8 946.2,265.6 947.2,239.9 947.9,249.9 948.9,224.2 950.0,243.4 950.6,236.0 951.7,255.3 952.8,242.4 953.4,247.4 954.5,234.5 955.2,253.8 955.7,246.4 956.4,265.6 957.1,239.9 957.5,249.9 958.2,224.2 961.0,286.3 963.8,286.3 964.6,247.8 965.2,262.7 966.0,224.2 966.9,237.0 967.5,232.1 968.4,244.9 970.0,234.5 973.7,234.5 974.4,247.4 974.9,242.4 975.6,255.3 976.3,268.1 976.7,263.1 977.4,276.0 980.2,276.0 981.1,286.3 982.2,254.2 982.8,266.7 983.9,234.5 985.8,224.2 987.6,239.7 989.0,224.2 990.4,234.5 995.0,234.5 996.0,255.3 997.8,286.3 1002.5,286.3 1003.4,296.7 1006.2,255.3 1008.0,281.2 1009.9,255.3 1011.7,286.3 1013.6,276.0 1015.5,286.3 1018.2,296.7 1020.5,276.0 1022.9,286.3 1024.7,265.6 1026.6,265.6 1028.0,234.5 1030.3,286.3 1032.2,296.7 1033.0,296.7 1033.8,296.7 1034.5,296.7 1035.3,296.7 1036.1,296.7 1036.9,296.7 1037.7,296.7 1038.4,296.7 1039.2,296.7 1040.0,296.7 1040.8,296.7 1041.6,286.3 1042.3,286.3 1043.1,286.3 1043.9,286.3 1044.7,296.7 1045.5,296.7 1046.2,296.7 1047.0,296.7 1047.8,296.7 1048.6,286.3 1049.4,296.7 1050.1,296.7 1050.9,296.7 1051.7,286.3 1052.5,296.7 1053.3,296.7 1054.0,296.7 1054.8,286.3 1055.6,286.3 1056.4,296.7 1057.2,296.7 1057.9,296.7 1058.7,296.7 1059.5,296.7 1060.3,296.7 1061.1,296.7 1061.8,296.7 1062.6,296.7 1063.4,296.7 1064.2,296.7 1065.0,296.7 1065.7,296.7 1066.5,296.7 1067.3,296.7 1068.1,296.7 1068.9,296.7 1069.6,296.7 1070.4,296.7 1071.2,296.7 1072.0,296.7 1072.8,296.7 1073.5,296.7 1074.3,296.7 1075.1,296.7 1075.9,296.7 1076.7,296.7 1077.4,296.7 1078.2,296.7 1079.0,296.7 1079.8,296.7 1080.6,286.3 1081.3,286.3 1082.1,296.7 1082.9,296.7 1083.7,296.7 1084.5,296.7 1085.2,296.7 1086.0,296.7 1086.8,296.7 1087.6,286.3 1088.4,286.3 1089.1,296.7 1089.9,296.7 1090.7,296.7 1091.5,296.7 1092.3,296.7 1093.0,296.7 1093.8,296.7 1094.6,296.7 1095.4,296.7 1096.2,296.7 1096.9,296.7 1097.7,296.7 1098.5,296.7 1099.3,296.7 1100.1,296.7 1100.8,296.7 1101.6,296.7 1102.4,296.7 1103.2,296.7 1104.0,286.3 1104.7,296.7 1105.5,296.7 1106.3,296.7 1107.1,296.7 1107.9,296.7 1108.6,296.7 1109.4,296.7 1110.2,296.7 1111.0,296.7 1111.8,296.7 1112.5,296.7 1113.3,296.7 1114.1,296.7 1114.9,296.7 1115.7,286.3 1116.4,286.3 1117.2,296.7 1118.0,296.7 1118.8,296.7 1119.6,286.3 1120.3,286.3 1121.1,296.7 1121.9,296.7 1122.7,296.7 1123.5,296.7 1124.2,286.3 1125.0,296.7 1125.8,296.7 1126.6,296.7 1127.4,296.7 1128.1,296.7 1128.9,296.7 1129.7,296.7 1130.5,296.7 1131.3,296.7 1132.0,296.7 1132.8,296.7 1133.6,286.3 1134.4,286.3 1135.2,296.7 1135.9,296.7 1136.7,296.7 1137.5,296.7 1138.3,296.7 1139.1,296.7 1139.8,286.3 1140.6,286.3 1141.4,296.7 1142.2,296.7 1143.0,286.3 1143.7,296.7 1144.5,286.3 1145.3,286.3 1146.1,286.3 1146.9,286.3 1147.6,286.3 1148.4,286.3 1149.2,286.3 1150.0,296.7 1150.8,296.7 1151.5,296.7 1152.3,296.7 1153.1,296.7 1153.9,296.7 1154.7,296.7 1155.4,296.7 1156.2,296.7 1157.0,296.7 1157.8,286.3 1158.6,286.3 1159.3,286.3 1160.1,286.3 1160.9,296.7 1161.7,286.3 1162.5,286.3 1163.2,286.3 1164.0,286.3 1164.8,286.3 1165.6,286.3 1166.4,286.3 1167.1,286.3 1167.9,286.3 1168.7,286.3 1169.5,286.3 1170.3,296.7 1171.0,286.3 1171.8,286.3 1172.6,296.7 1173.4,286.3 1174.2,286.3 1174.9,286.3 1175.7,286.3 1176.5,286.3 1177.3,286.3 1178.1,286.3 1178.8,286.3 1179.6,286.3 1180.4,286.3 1181.2,286.3 1182.0,276.0 1182.7,286.3 1183.5,286.3 1184.3,286.3 1185.1,286.3 1185.9,276.0 1186.6,286.3 1187.4,286.3 1188.2,286.3 1189.0,286.3 1189.8,286.3 1190.5,286.3 1191.3,286.3 1192.1,286.3 1192.9,286.3 1193.7,286.3 1194.4,286.3 1195.2,286.3 1196.0,286.3 1196.8,286.3 1197.6,286.3 1198.3,286.3 1199.1,286.3 1199.9,286.3 1200.7,286.3" fill="none" stroke="#ececec" stroke-width="1.5" stroke-linejoin="round" />
<polyline points="223.0,299.0 233.0,288.8 238.0,287.4 246.0,297.6 254.3,281.5 262.4,299.0 757.2,299.0 765.5,279.5 787.0,279.5 797.0,298.0 804.5,271.0 812.0,278.5 820.0,257.6 843.0,257.6 849.7,248.8 859.0,278.5 866.4,278.5 873.0,257.6 889.5,257.6 897.0,248.8 904.4,264.6 912.8,268.3 920.0,257.6 936.0,257.6 944.3,278.5 966.5,278.5 975.6,287.8 983.0,280.4 990.4,286.9 997.8,279.5 1005.0,279.5 1013.6,298.5 1029.4,298.5 1036.8,282.2 1044.0,298.5" fill="none" stroke="#12cc12" stroke-width="1.35" stroke-linejoin="round" />
<rect x="84" y="298.9" width="1118" height="2.6" fill="#96f896" />
<rect x="82" y="301.4" width="1122" height="0.8" fill="#c0c0c0" />
<rect x="82" y="13" width="2.6" height="289" fill="#ffffff" />
<rect x="1201.6" y="13" width="2.4" height="289" fill="#ffffff" />
<rect x="82" y="13" width="1122" height="1" fill="#f4f4f4" />
<g font-family="'Liberation Sans', sans-serif" font-size="8.3" letter-spacing="-0.2">
<text x="84.5" y="414.40000000000003" fill="#ffff00" font-size="8.3" text-anchor="end" >0</text>
<text x="84.5" y="392.8" fill="#ffff00" font-size="8.3" text-anchor="end" >90</text>
<text x="84.5" y="371.20000000000005" fill="#ffff00" font-size="8.3" text-anchor="end" >180</text>
<text x="84.5" y="349.6" fill="#ffff00" font-size="8.3" text-anchor="end" >270</text>
<text x="84.5" y="328.00000000000006" fill="#ffff00" font-size="8.3" text-anchor="end" >360</text>
</g>
<rect x="55" y="316" width="37" height="7.9" fill="#000" />
<rect x="92" y="323.3" width="1121" height="91.69999999999999" fill="url(#g)" />
<line x1="87.8" y1="412.1" x2="92" y2="412.1" stroke="#ffff00" stroke-width="1.3" />
<line x1="89.8" y1="406.70000000000005" x2="92" y2="406.70000000000005" stroke="#d0d000" stroke-width="1" />
<line x1="89.8" y1="401.3" x2="92" y2="401.3" stroke="#d0d000" stroke-width="1" />
<line x1="89.8" y1="395.90000000000003" x2="92" y2="395.90000000000003" stroke="#d0d000" stroke-width="1" />
<line x1="87.8" y1="390.5" x2="92" y2="390.5" stroke="#ffff00" stroke-width="1.3" />
<line x1="89.8" y1="385.1" x2="92" y2="385.1" stroke="#d0d000" stroke-width="1" />
<line x1="89.8" y1="379.70000000000005" x2="92" y2="379.70000000000005" stroke="#d0d000" stroke-width="1" />
<line x1="89.8" y1="374.3" x2="92" y2="374.3" stroke="#d0d000" stroke-width="1" />
<line x1="87.8" y1="368.90000000000003" x2="92" y2="368.90000000000003" stroke="#ffff00" stroke-width="1.3" />
<line x1="89.8" y1="363.5" x2="92" y2="363.5" stroke="#d0d000" stroke-width="1" />
<line x1="89.8" y1="358.1" x2="92" y2="358.1" stroke="#d0d000" stroke-width="1" />
<line x1="89.8" y1="352.70000000000005" x2="92" y2="352.70000000000005" stroke="#d0d000" stroke-width="1" />
<line x1="87.8" y1="347.3" x2="92" y2="347.3" stroke="#ffff00" stroke-width="1.3" />
<line x1="89.8" y1="341.90000000000003" x2="92" y2="341.90000000000003" stroke="#d0d000" stroke-width="1" />
<line x1="89.8" y1="336.5" x2="92" y2="336.5" stroke="#d0d000" stroke-width="1" />
<line x1="89.8" y1="331.1" x2="92" y2="331.1" stroke="#d0d000" stroke-width="1" />
<line x1="87.8" y1="325.70000000000005" x2="92" y2="325.70000000000005" stroke="#ffff00" stroke-width="1.3" />
<line x1="95" y1="390.5" x2="1213" y2="390.5" stroke="#dedede" stroke-width="1" stroke-dasharray="1 1" opacity="0.45"/>
<line x1="95" y1="368.90000000000003" x2="1213" y2="368.90000000000003" stroke="#dedede" stroke-width="1" stroke-dasharray="1 1" opacity="0.35"/>
<line x1="95" y1="347.3" x2="1213" y2="347.3" stroke="#dedede" stroke-width="1" stroke-dasharray="1 1" opacity="0.25"/>
<g font-family="'Liberation Sans', sans-serif" font-size="16.6" fill="#ffff00" stroke="#000" stroke-width="0.28">
<text x="1253" y="331.0" textLength="9" lengthAdjust="spacingAndGlyphs">N</text>
<text x="1252" y="352.7" textLength="13" lengthAdjust="spacingAndGlyphs">W</text>
<text x="1253" y="374.4" textLength="9" lengthAdjust="spacingAndGlyphs">S</text>
<text x="1253" y="396.1" textLength="9" lengthAdjust="spacingAndGlyphs">E</text>
<text x="1253" y="417.8" textLength="9" lengthAdjust="spacingAndGlyphs">N</text>
</g>
<polyline points="95.3,330.0 112.9,330.0 113.5,412.4 114.7,331.2 116.8,328.2 119.1,334.8 122.6,336.5 125.3,337.8 127.9,336.2 131.5,337.8 163.2,337.8 165.0,336.5 174.7,336.5 176.5,334.8 181.8,334.8 183.2,338.8 188.8,337.4 192.3,334.8 194.1,328.2 195.3,336.5 196.8,337.4 204.7,336.5 206.5,333.5 210.0,331.8 224.1,331.8 225.9,329.5 227.6,331.8 231.2,333.5 233.8,331.8 235.6,330.0 245.3,330.0 247.0,327.7 249.7,329.5 252.3,326.8 255.0,325.4 256.2,326.8 256.8,410.6 257.6,332.1 259.4,334.8 261.2,331.8 262.6,337.8 263.8,333.0 278.8,333.0 279.7,331.2 284.1,331.8 287.6,332.5 294.7,331.8 297.3,333.0 309.2,333.0 317.1,333.0 317.9,328.2 318.8,408.0 320.6,410.1 340.9,410.1 342.6,404.1 345.3,404.1 346.2,408.0 347.1,331.2 349.2,331.2 349.7,411.5 352.4,408.3 355.0,409.8 355.5,412.4 356.8,408.3 359.4,410.6 363.8,410.1 366.5,404.1 369.1,409.8 372.6,412.9 373.9,331.2 377.1,332.1 379.2,328.2 380.6,331.2 385.9,330.0 388.5,330.7 399.1,330.7 400.3,333.0 401.4,326.8 419.8,326.8 420.8,341.8 466.2,341.8 467.9,328.2 505.9,328.2 506.8,329.5 508.5,326.8 539.4,326.8 540.0,326.8 549.7,326.8 551.5,337.8 576.2,337.8 577.1,328.2 577.4,404.1 585.0,404.1 586.2,366.5 588.5,364.8 594.7,365.6 596.5,376.2 597.9,385.9 604.9,385.9 606.2,379.8 608.5,379.8 609.3,395.3 618.5,395.3 619.8,381.5 621.2,385.9 626.5,386.8 627.7,384.7 629.1,390.3 631.8,388.6 638.8,388.6 640.1,382.4 641.5,385.9 642.7,388.6 643.2,400.1 644.5,395.6 646.8,402.7 648.5,406.2 650.8,412.4 652.9,404.5 653.8,333.9 654.7,333.0 655.9,326.8 656.5,402.7 657.9,398.3 658.6,400.9 660.0,390.3 661.1,411.2 661.8,402.7 662.3,333.0 663.5,333.0 664.9,334.8 665.6,385.9 667.1,376.2 674.1,376.2 675.9,383.3 679.4,374.5 685.6,374.5 687.3,368.3 688.8,364.8 690.9,369.2 694.4,369.2 697.0,378.0 698.8,380.6 702.3,377.1 705.0,395.6 706.8,375.3 708.5,383.3 714.7,381.9 721.8,381.2 723.5,372.7 724.9,367.4 726.2,373.6 729.7,378.0 731.5,374.5 732.9,356.5 733.8,357.7 735.0,378.0 736.2,356.5 737.6,358.6 739.4,369.2 744.7,375.3 746.5,361.2 747.9,374.5 750.9,376.2 753.5,357.7 754.9,355.4 757.9,358.6 760.6,374.5 763.2,375.3 764.1,358.6 765.0,374.5 766.8,378.9 768.5,379.8 769.4,385.1 770.0,378.0 773.5,379.8 777.1,376.2 777.9,354.2 779.2,376.2 781.5,381.5 783.2,383.9 785.0,388.6 786.8,382.4 789.0,381.7 791.2,380.6 792.9,388.6 794.7,383.3 796.5,381.4 798.2,380.6 800.9,377.1 803.1,378.9 805.3,379.8 807.9,385.1 809.7,378.0 812.0,386.8 814.1,379.8 816.8,384.2 818.5,378.0 820.7,379.9 822.9,380.6 824.7,378.1 826.5,377.3 828.2,378.9 830.0,378.9 831.8,375.9 834.0,376.3 836.2,378.9 838.8,376.2 840.6,375.9 842.3,380.2 844.1,378.9 845.9,377.9 847.6,377.1 850.3,380.6 852.9,378.0 854.7,377.7 856.5,374.5 858.8,364.2 860.0,378.0 861.8,370.9 863.9,359.5 866.2,375.3 868.4,377.0 870.6,378.9 872.3,378.2 874.1,376.2 876.8,369.5 878.0,378.0 881.2,378.9 882.4,371.8 884.7,371.8 885.6,379.8 887.8,376.9 890.0,377.1 891.8,378.1 893.5,378.0 895.6,371.8 896.2,381.5 897.9,372.7 899.7,373.9 901.5,371.8 902.7,377.1 905.9,380.6 907.6,378.5 909.4,376.2 912.1,379.8 915.1,385.1 918.2,378.9 920.0,378.8 921.8,377.3 923.5,375.3 925.3,374.8 927.0,378.0 928.8,378.7 930.6,377.5 932.3,375.8 934.1,376.2 935.9,372.4 937.6,372.7 940.3,375.3 942.0,375.2 943.8,371.8 945.6,366.5 946.8,377.1 950.0,374.5 952.6,378.0 954.4,371.8 956.2,378.0 957.9,369.5 959.7,378.0 961.5,380.6 963.7,377.4 965.9,374.5 968.5,377.1 971.2,370.1 972.9,380.6 975.6,371.8 977.3,374.5 979.1,373.5 980.9,370.6 982.6,376.8 984.4,379.8 986.2,378.9 987.9,376.2 990.9,385.1 992.3,378.9 994.1,380.5 995.9,378.0 997.6,379.5 999.4,378.0 1000.0,378.9 1001.8,377.8 1003.5,377.1 1005.3,381.2 1007.1,381.5 1008.8,377.1 1010.6,379.7 1012.4,378.9 1014.6,377.5 1016.8,379.8 1019.4,377.1 1021.2,374.2 1022.9,374.5 1024.7,382.4 1026.5,381.3 1028.2,384.8 1030.0,382.9 1031.8,367.4 1033.5,376.2 1036.2,374.5 1038.8,377.1 1040.6,373.6 1042.4,377.1 1049.4,377.1 1051.2,381.2 1052.9,380.6 1054.3,370.9 1063.5,370.9 1066.2,372.3 1070.6,372.3 1072.3,370.9 1109.4,370.9 1110.3,404.8 1153.5,404.8 1156.2,411.5 1157.0,411.5 1157.9,330.0 1171.2,330.0 1172.0,327.2 1172.6,409.8 1175.6,409.8 1176.1,412.4 1176.8,333.0 1181.8,333.0 1183.2,326.8 1185.3,327.7 1187.0,331.2 1187.9,328.6 1189.7,333.5 1191.5,331.2 1195.0,330.4 1197.6,325.9 1206.5,325.9 1209.1,331.8 1211.8,332.1" fill="none" stroke="#ecec2c" stroke-width="1.55" stroke-linejoin="round" />
<rect x="92" y="323.3" width="1121" height="1" fill="#e8e8e8" />
<rect x="92" y="413" width="1121" height="2.1" fill="#cccccc" />
<rect x="92" y="323.3" width="2.4" height="92" fill="#ffffff" />
<g font-family="'Liberation Sans', sans-serif" font-size="8.3" letter-spacing="-0.2">
<text x="91.5" y="705.5500000000001" fill="#ff0000" font-size="8.3" text-anchor="end" >0</text>
<text x="91.5" y="663.85" fill="#ff0000" font-size="8.3" text-anchor="end" >5</text>
<text x="91.5" y="622.1500000000001" fill="#ff0000" font-size="8.3" text-anchor="end" >10</text>
<text x="91.5" y="580.45" fill="#ff0000" font-size="8.3" text-anchor="end" >15</text>
<text x="91.5" y="538.7500000000001" fill="#ff0000" font-size="8.3" text-anchor="end" >20</text>
<text x="91.5" y="497.05000000000007" fill="#ff0000" font-size="8.3" text-anchor="end" >25</text>
<text x="91.5" y="455.3500000000001" fill="#ff0000" font-size="8.3" text-anchor="end" >30</text>
<text x="30" y="705.5500000000001" fill="#8080ff" font-size="8.3" text-anchor="end" >0</text>
<text x="30" y="693.0500000000001" fill="#8080ff" font-size="8.3" text-anchor="end" >5</text>
<text x="30" y="680.5500000000001" fill="#8080ff" font-size="8.3" text-anchor="end" >10</text>
<text x="30" y="668.0500000000001" fill="#8080ff" font-size="8.3" text-anchor="end" >15</text>
<text x="30" y="655.5500000000001" fill="#8080ff" font-size="8.3" text-anchor="end" >20</text>
<text x="30" y="643.0500000000001" fill="#8080ff" font-size="8.3" text-anchor="end" >25</text>
<text x="30" y="630.5500000000001" fill="#8080ff" font-size="8.3" text-anchor="end" >30</text>
<text x="30" y="618.0500000000001" fill="#8080ff" font-size="8.3" text-anchor="end" >35</text>
<text x="30" y="605.5500000000001" fill="#8080ff" font-size="8.3" text-anchor="end" >40</text>
<text x="30" y="593.0500000000001" fill="#8080ff" font-size="8.3" text-anchor="end" >45</text>
<text x="30" y="580.5500000000001" fill="#8080ff" font-size="8.3" text-anchor="end" >50</text>
<text x="30" y="568.0500000000001" fill="#8080ff" font-size="8.3" text-anchor="end" >55</text>
<text x="30" y="555.5500000000001" fill="#8080ff" font-size="8.3" text-anchor="end" >60</text>
<text x="30" y="543.0500000000001" fill="#8080ff" font-size="8.3" text-anchor="end" >65</text>
<text x="30" y="530.5500000000001" fill="#8080ff" font-size="8.3" text-anchor="end" >70</text>
<text x="30" y="518.0500000000001" fill="#8080ff" font-size="8.3" text-anchor="end" >75</text>
<text x="30" y="505.55000000000007" fill="#8080ff" font-size="8.3" text-anchor="end" >80</text>
<text x="30" y="493.05000000000007" fill="#8080ff" font-size="8.3" text-anchor="end" >85</text>
<text x="30" y="480.55000000000007" fill="#8080ff" font-size="8.3" text-anchor="end" >90</text>
<text x="30" y="468.05000000000007" fill="#8080ff" font-size="8.3" text-anchor="end" >95</text>
<text x="30" y="455.55000000000007" fill="#8080ff" font-size="8.3" text-anchor="end" >100</text>
<text x="1215.5" y="705.5500000000001" fill="#00ff00" font-size="8.3" text-anchor="start" >0</text>
<text x="1215.5" y="693.0500000000001" fill="#00ff00" font-size="8.3" text-anchor="start" >2</text>
<text x="1215.5" y="680.5500000000001" fill="#00ff00" font-size="8.3" text-anchor="start" >4</text>
<text x="1215.5" y="668.0500000000001" fill="#00ff00" font-size="8.3" text-anchor="start" >6</text>
<text x="1215.5" y="655.5500000000001" fill="#00ff00" font-size="8.3" text-anchor="start" >8</text>
<text x="1215.5" y="643.0500000000001" fill="#00ff00" font-size="8.3" text-anchor="start" >10</text>
<text x="1215.5" y="630.5500000000001" fill="#00ff00" font-size="8.3" text-anchor="start" >12</text>
<text x="1215.5" y="618.0500000000001" fill="#00ff00" font-size="8.3" text-anchor="start" >14</text>
<text x="1215.5" y="605.5500000000001" fill="#00ff00" font-size="8.3" text-anchor="start" >16</text>
<text x="1215.5" y="593.0500000000001" fill="#00ff00" font-size="8.3" text-anchor="start" >18</text>
<text x="1215.5" y="580.5500000000001" fill="#00ff00" font-size="8.3" text-anchor="start" >20</text>
<text x="1215.5" y="568.0500000000001" fill="#00ff00" font-size="8.3" text-anchor="start" >22</text>
<text x="1215.5" y="555.5500000000001" fill="#00ff00" font-size="8.3" text-anchor="start" >24</text>
<text x="1215.5" y="543.0500000000001" fill="#00ff00" font-size="8.3" text-anchor="start" >26</text>
<text x="1215.5" y="530.5500000000001" fill="#00ff00" font-size="8.3" text-anchor="start" >28</text>
<text x="1215.5" y="518.0500000000001" fill="#00ff00" font-size="8.3" text-anchor="start" >30</text>
<text x="1215.5" y="505.55000000000007" fill="#00ff00" font-size="8.3" text-anchor="start" >32</text>
<text x="1215.5" y="493.05000000000007" fill="#00ff00" font-size="8.3" text-anchor="start" >34</text>
<text x="1215.5" y="480.55000000000007" fill="#00ff00" font-size="8.3" text-anchor="start" >36</text>
<text x="1215.5" y="468.05000000000007" fill="#00ff00" font-size="8.3" text-anchor="start" >38</text>
<text x="1215.5" y="455.55000000000007" fill="#00ff00" font-size="8.3" text-anchor="start" >40</text>
</g>
<rect x="0" y="441" width="97" height="9.7" fill="#000" />
<rect x="1209" y="441" width="151" height="9.7" fill="#000" />
<rect x="10" y="445" width="10.8" height="13" fill="#000" />
<rect x="97" y="450" width="1112" height="258.5" fill="url(#g)" />
<line x1="92" y1="703.7" x2="97" y2="703.7" stroke="#ff0000" stroke-width="1.3" />
<line x1="94.5" y1="693.2750000000001" x2="97" y2="693.2750000000001" stroke="#e00000" stroke-width="1" />
<line x1="94.5" y1="682.85" x2="97" y2="682.85" stroke="#e00000" stroke-width="1" />
<line x1="94.5" y1="672.4250000000001" x2="97" y2="672.4250000000001" stroke="#e00000" stroke-width="1" />
<line x1="92" y1="662.0" x2="97" y2="662.0" stroke="#ff0000" stroke-width="1.3" />
<line x1="94.5" y1="651.575" x2="97" y2="651.575" stroke="#e00000" stroke-width="1" />
<line x1="94.5" y1="641.1500000000001" x2="97" y2="641.1500000000001" stroke="#e00000" stroke-width="1" />
<line x1="94.5" y1="630.725" x2="97" y2="630.725" stroke="#e00000" stroke-width="1" />
<line x1="92" y1="620.3000000000001" x2="97" y2="620.3000000000001" stroke="#ff0000" stroke-width="1.3" />
<line x1="94.5" y1="609.875" x2="97" y2="609.875" stroke="#e00000" stroke-width="1" />
<line x1="94.5" y1="599.45" x2="97" y2="599.45" stroke="#e00000" stroke-width="1" />
<line x1="94.5" y1="589.0250000000001" x2="97" y2="589.0250000000001" stroke="#e00000" stroke-width="1" />
<line x1="92" y1="578.6" x2="97" y2="578.6" stroke="#ff0000" stroke-width="1.3" />
<line x1="94.5" y1="568.1750000000001" x2="97" y2="568.1750000000001" stroke="#e00000" stroke-width="1" />
<line x1="94.5" y1="557.75" x2="97" y2="557.75" stroke="#e00000" stroke-width="1" />
<line x1="94.5" y1="547.325" x2="97" y2="547.325" stroke="#e00000" stroke-width="1" />
<line x1="92" y1="536.9000000000001" x2="97" y2="536.9000000000001" stroke="#ff0000" stroke-width="1.3" />
<line x1="94.5" y1="526.475" x2="97" y2="526.475" stroke="#e00000" stroke-width="1" />
<line x1="94.5" y1="516.0500000000001" x2="97" y2="516.0500000000001" stroke="#e00000" stroke-width="1" />
<line x1="94.5" y1="505.62500000000006" x2="97" y2="505.62500000000006" stroke="#e00000" stroke-width="1" />
<line x1="92" y1="495.20000000000005" x2="97" y2="495.20000000000005" stroke="#ff0000" stroke-width="1.3" />
<line x1="94.5" y1="484.7750000000001" x2="97" y2="484.7750000000001" stroke="#e00000" stroke-width="1" />
<line x1="94.5" y1="474.35" x2="97" y2="474.35" stroke="#e00000" stroke-width="1" />
<line x1="94.5" y1="463.92500000000007" x2="97" y2="463.92500000000007" stroke="#e00000" stroke-width="1" />
<line x1="92" y1="453.50000000000006" x2="97" y2="453.50000000000006" stroke="#ff0000" stroke-width="1.3" />
<rect x="36" y="450" width="2" height="256.7" fill="#8080ff" />
<line x1="31.7" y1="703.7" x2="36" y2="703.7" stroke="#8080ff" stroke-width="1.3" />
<line x1="34" y1="701.2" x2="36" y2="701.2" stroke="#7070e0" stroke-width="0.8" />
<line x1="34" y1="698.7" x2="36" y2="698.7" stroke="#7070e0" stroke-width="0.8" />
<line x1="34" y1="696.2" x2="36" y2="696.2" stroke="#7070e0" stroke-width="0.8" />
<line x1="34" y1="693.7" x2="36" y2="693.7" stroke="#7070e0" stroke-width="0.8" />
<line x1="31.7" y1="691.2" x2="36" y2="691.2" stroke="#8080ff" stroke-width="1.3" />
<line x1="34" y1="688.7" x2="36" y2="688.7" stroke="#7070e0" stroke-width="0.8" />
<line x1="34" y1="686.2" x2="36" y2="686.2" stroke="#7070e0" stroke-width="0.8" />
<line x1="34" y1="683.7" x2="36" y2="683.7" stroke="#7070e0" stroke-width="0.8" />
<line x1="34" y1="681.2" x2="36" y2="681.2" stroke="#7070e0" stroke-width="0.8" />
<line x1="31.7" y1="678.7" x2="36" y2="678.7" stroke="#8080ff" stroke-width="1.3" />
<line x1="34" y1="676.2" x2="36" y2="676.2" stroke="#7070e0" stroke-width="0.8" />
<line x1="34" y1="673.7" x2="36" y2="673.7" stroke="#7070e0" stroke-width="0.8" />
<line x1="34" y1="671.2" x2="36" y2="671.2" stroke="#7070e0" stroke-width="0.8" />
<line x1="34" y1="668.7" x2="36" y2="668.7" stroke="#7070e0" stroke-width="0.8" />
<line x1="31.7" y1="666.2" x2="36" y2="666.2" stroke="#8080ff" stroke-width="1.3" />
<line x1="34" y1="663.7" x2="36" y2="663.7" stroke="#7070e0" stroke-width="0.8" />
<line x1="34" y1="661.2" x2="36" y2="661.2" stroke="#7070e0" stroke-width="0.8" />
<line x1="34" y1="658.7" x2="36" y2="658.7" stroke="#7070e0" stroke-width="0.8" />
<line x1="34" y1="656.2" x2="36" y2="656.2" stroke="#7070e0" stroke-width="0.8" />
<line x1="31.7" y1="653.7" x2="36" y2="653.7" stroke="#8080ff" stroke-width="1.3" />
<line x1="34" y1="651.2" x2="36" y2="651.2" stroke="#7070e0" stroke-width="0.8" />
<line x1="34" y1="648.7" x2="36" y2="648.7" stroke="#7070e0" stroke-width="0.8" />
<line x1="34" y1="646.2" x2="36" y2="646.2" stroke="#7070e0" stroke-width="0.8" />
<line x1="34" y1="643.7" x2="36" y2="643.7" stroke="#7070e0" stroke-width="0.8" />
<line x1="31.7" y1="641.2" x2="36" y2="641.2" stroke="#8080ff" stroke-width="1.3" />
<line x1="34" y1="638.7" x2="36" y2="638.7" stroke="#7070e0" stroke-width="0.8" />
<line x1="34" y1="636.2" x2="36" y2="636.2" stroke="#7070e0" stroke-width="0.8" />
<line x1="34" y1="633.7" x2="36" y2="633.7" stroke="#7070e0" stroke-width="0.8" />
<line x1="34" y1="631.2" x2="36" y2="631.2" stroke="#7070e0" stroke-width="0.8" />
<line x1="31.7" y1="628.7" x2="36" y2="628.7" stroke="#8080ff" stroke-width="1.3" />
<line x1="34" y1="626.2" x2="36" y2="626.2" stroke="#7070e0" stroke-width="0.8" />
<line x1="34" y1="623.7" x2="36" y2="623.7" stroke="#7070e0" stroke-width="0.8" />
<line x1="34" y1="621.2" x2="36" y2="621.2" stroke="#7070e0" stroke-width="0.8" />
<line x1="34" y1="618.7" x2="36" y2="618.7" stroke="#7070e0" stroke-width="0.8" />
<line x1="31.7" y1="616.2" x2="36" y2="616.2" stroke="#8080ff" stroke-width="1.3" />
<line x1="34" y1="613.7" x2="36" y2="613.7" stroke="#7070e0" stroke-width="0.8" />
<line x1="34" y1="611.2" x2="36" y2="611.2" stroke="#7070e0" stroke-width="0.8" />
<line x1="34" y1="608.7" x2="36" y2="608.7" stroke="#7070e0" stroke-width="0.8" />
<line x1="34" y1="606.2" x2="36" y2="606.2" stroke="#7070e0" stroke-width="0.8" />
<line x1="31.7" y1="603.7" x2="36" y2="603.7" stroke="#8080ff" stroke-width="1.3" />
<line x1="34" y1="601.2" x2="36" y2="601.2" stroke="#7070e0" stroke-width="0.8" />
<line x1="34" y1="598.7" x2="36" y2="598.7" stroke="#7070e0" stroke-width="0.8" />
<line x1="34" y1="596.2" x2="36" y2="596.2" stroke="#7070e0" stroke-width="0.8" />
<line x1="34" y1="593.7" x2="36" y2="593.7" stroke="#7070e0" stroke-width="0.8" />
<line x1="31.7" y1="591.2" x2="36" y2="591.2" stroke="#8080ff" stroke-width="1.3" />
<line x1="34" y1="588.7" x2="36" y2="588.7" stroke="#7070e0" stroke-width="0.8" />
<line x1="34" y1="586.2" x2="36" y2="586.2" stroke="#7070e0" stroke-width="0.8" />
<line x1="34" y1="583.7" x2="36" y2="583.7" stroke="#7070e0" stroke-width="0.8" />
<line x1="34" y1="581.2" x2="36" y2="581.2" stroke="#7070e0" stroke-width="0.8" />
<line x1="31.7" y1="578.7" x2="36" y2="578.7" stroke="#8080ff" stroke-width="1.3" />
<line x1="34" y1="576.2" x2="36" y2="576.2" stroke="#7070e0" stroke-width="0.8" />
<line x1="34" y1="573.7" x2="36" y2="573.7" stroke="#7070e0" stroke-width="0.8" />
<line x1="34" y1="571.2" x2="36" y2="571.2" stroke="#7070e0" stroke-width="0.8" />
<line x1="34" y1="568.7" x2="36" y2="568.7" stroke="#7070e0" stroke-width="0.8" />
<line x1="31.7" y1="566.2" x2="36" y2="566.2" stroke="#8080ff" stroke-width="1.3" />
<line x1="34" y1="563.7" x2="36" y2="563.7" stroke="#7070e0" stroke-width="0.8" />
<line x1="34" y1="561.2" x2="36" y2="561.2" stroke="#7070e0" stroke-width="0.8" />
<line x1="34" y1="558.7" x2="36" y2="558.7" stroke="#7070e0" stroke-width="0.8" />
<line x1="34" y1="556.2" x2="36" y2="556.2" stroke="#7070e0" stroke-width="0.8" />
<line x1="31.7" y1="553.7" x2="36" y2="553.7" stroke="#8080ff" stroke-width="1.3" />
<line x1="34" y1="551.2" x2="36" y2="551.2" stroke="#7070e0" stroke-width="0.8" />
<line x1="34" y1="548.7" x2="36" y2="548.7" stroke="#7070e0" stroke-width="0.8" />
<line x1="34" y1="546.2" x2="36" y2="546.2" stroke="#7070e0" stroke-width="0.8" />
<line x1="34" y1="543.7" x2="36" y2="543.7" stroke="#7070e0" stroke-width="0.8" />
<line x1="31.7" y1="541.2" x2="36" y2="541.2" stroke="#8080ff" stroke-width="1.3" />
<line x1="34" y1="538.7" x2="36" y2="538.7" stroke="#7070e0" stroke-width="0.8" />
<line x1="34" y1="536.2" x2="36" y2="536.2" stroke="#7070e0" stroke-width="0.8" />
<line x1="34" y1="533.7" x2="36" y2="533.7" stroke="#7070e0" stroke-width="0.8" />
<line x1="34" y1="531.2" x2="36" y2="531.2" stroke="#7070e0" stroke-width="0.8" />
<line x1="31.7" y1="528.7" x2="36" y2="528.7" stroke="#8080ff" stroke-width="1.3" />
<line x1="34" y1="526.2" x2="36" y2="526.2" stroke="#7070e0" stroke-width="0.8" />
<line x1="34" y1="523.7" x2="36" y2="523.7" stroke="#7070e0" stroke-width="0.8" />
<line x1="34" y1="521.2" x2="36" y2="521.2" stroke="#7070e0" stroke-width="0.8" />
<line x1="34" y1="518.7" x2="36" y2="518.7" stroke="#7070e0" stroke-width="0.8" />
<line x1="31.7" y1="516.2" x2="36" y2="516.2" stroke="#8080ff" stroke-width="1.3" />
<line x1="34" y1="513.7" x2="36" y2="513.7" stroke="#7070e0" stroke-width="0.8" />
<line x1="34" y1="511.20000000000005" x2="36" y2="511.20000000000005" stroke="#7070e0" stroke-width="0.8" />
<line x1="34" y1="508.70000000000005" x2="36" y2="508.70000000000005" stroke="#7070e0" stroke-width="0.8" />
<line x1="34" y1="506.20000000000005" x2="36" y2="506.20000000000005" stroke="#7070e0" stroke-width="0.8" />
<line x1="31.7" y1="503.70000000000005" x2="36" y2="503.70000000000005" stroke="#8080ff" stroke-width="1.3" />
<line x1="34" y1="501.20000000000005" x2="36" y2="501.20000000000005" stroke="#7070e0" stroke-width="0.8" />
<line x1="34" y1="498.70000000000005" x2="36" y2="498.70000000000005" stroke="#7070e0" stroke-width="0.8" />
<line x1="34" y1="496.20000000000005" x2="36" y2="496.20000000000005" stroke="#7070e0" stroke-width="0.8" />
<line x1="34" y1="493.70000000000005" x2="36" y2="493.70000000000005" stroke="#7070e0" stroke-width="0.8" />
<line x1="31.7" y1="491.20000000000005" x2="36" y2="491.20000000000005" stroke="#8080ff" stroke-width="1.3" />
<line x1="34" y1="488.70000000000005" x2="36" y2="488.70000000000005" stroke="#7070e0" stroke-width="0.8" />
<line x1="34" y1="486.20000000000005" x2="36" y2="486.20000000000005" stroke="#7070e0" stroke-width="0.8" />
<line x1="34" y1="483.70000000000005" x2="36" y2="483.70000000000005" stroke="#7070e0" stroke-width="0.8" />
<line x1="34" y1="481.20000000000005" x2="36" y2="481.20000000000005" stroke="#7070e0" stroke-width="0.8" />
<line x1="31.7" y1="478.70000000000005" x2="36" y2="478.70000000000005" stroke="#8080ff" stroke-width="1.3" />
<line x1="34" y1="476.20000000000005" x2="36" y2="476.20000000000005" stroke="#7070e0" stroke-width="0.8" />
<line x1="34" y1="473.70000000000005" x2="36" y2="473.70000000000005" stroke="#7070e0" stroke-width="0.8" />
<line x1="34" y1="471.20000000000005" x2="36" y2="471.20000000000005" stroke="#7070e0" stroke-width="0.8" />
<line x1="34" y1="468.70000000000005" x2="36" y2="468.70000000000005" stroke="#7070e0" stroke-width="0.8" />
<line x1="31.7" y1="466.20000000000005" x2="36" y2="466.20000000000005" stroke="#8080ff" stroke-width="1.3" />
<line x1="34" y1="463.70000000000005" x2="36" y2="463.70000000000005" stroke="#7070e0" stroke-width="0.8" />
<line x1="34" y1="461.20000000000005" x2="36" y2="461.20000000000005" stroke="#7070e0" stroke-width="0.8" />
<line x1="34" y1="458.70000000000005" x2="36" y2="458.70000000000005" stroke="#7070e0" stroke-width="0.8" />
<line x1="34" y1="456.20000000000005" x2="36" y2="456.20000000000005" stroke="#7070e0" stroke-width="0.8" />
<line x1="31.7" y1="453.70000000000005" x2="36" y2="453.70000000000005" stroke="#8080ff" stroke-width="1.3" />
<line x1="1208.6" y1="703.7" x2="1212.4" y2="703.7" stroke="#00ff00" stroke-width="1.3" />
<line x1="1208.6" y1="700.575" x2="1210.4" y2="700.575" stroke="#00d800" stroke-width="1" />
<line x1="1208.6" y1="697.45" x2="1210.4" y2="697.45" stroke="#00d800" stroke-width="1" />
<line x1="1208.6" y1="694.325" x2="1210.4" y2="694.325" stroke="#00d800" stroke-width="1" />
<line x1="1208.6" y1="691.2" x2="1212.4" y2="691.2" stroke="#00ff00" stroke-width="1.3" />
<line x1="1208.6" y1="688.075" x2="1210.4" y2="688.075" stroke="#00d800" stroke-width="1" />
<line x1="1208.6" y1="684.95" x2="1210.4" y2="684.95" stroke="#00d800" stroke-width="1" />
<line x1="1208.6" y1="681.825" x2="1210.4" y2="681.825" stroke="#00d800" stroke-width="1" />
<line x1="1208.6" y1="678.7" x2="1212.4" y2="678.7" stroke="#00ff00" stroke-width="1.3" />
<line x1="1208.6" y1="675.575" x2="1210.4" y2="675.575" stroke="#00d800" stroke-width="1" />
<line x1="1208.6" y1="672.45" x2="1210.4" y2="672.45" stroke="#00d800" stroke-width="1" />
<line x1="1208.6" y1="669.325" x2="1210.4" y2="669.325" stroke="#00d800" stroke-width="1" />
<line x1="1208.6" y1="666.2" x2="1212.4" y2="666.2" stroke="#00ff00" stroke-width="1.3" />
<line x1="1208.6" y1="663.075" x2="1210.4" y2="663.075" stroke="#00d800" stroke-width="1" />
<line x1="1208.6" y1="659.95" x2="1210.4" y2="659.95" stroke="#00d800" stroke-width="1" />
<line x1="1208.6" y1="656.825" x2="1210.4" y2="656.825" stroke="#00d800" stroke-width="1" />
<line x1="1208.6" y1="653.7" x2="1212.4" y2="653.7" stroke="#00ff00" stroke-width="1.3" />
<line x1="1208.6" y1="650.575" x2="1210.4" y2="650.575" stroke="#00d800" stroke-width="1" />
<line x1="1208.6" y1="647.45" x2="1210.4" y2="647.45" stroke="#00d800" stroke-width="1" />
<line x1="1208.6" y1="644.325" x2="1210.4" y2="644.325" stroke="#00d800" stroke-width="1" />
<line x1="1208.6" y1="641.2" x2="1212.4" y2="641.2" stroke="#00ff00" stroke-width="1.3" />
<line x1="1208.6" y1="638.075" x2="1210.4" y2="638.075" stroke="#00d800" stroke-width="1" />
<line x1="1208.6" y1="634.95" x2="1210.4" y2="634.95" stroke="#00d800" stroke-width="1" />
<line x1="1208.6" y1="631.825" x2="1210.4" y2="631.825" stroke="#00d800" stroke-width="1" />
<line x1="1208.6" y1="628.7" x2="1212.4" y2="628.7" stroke="#00ff00" stroke-width="1.3" />
<line x1="1208.6" y1="625.575" x2="1210.4" y2="625.575" stroke="#00d800" stroke-width="1" />
<line x1="1208.6" y1="622.45" x2="1210.4" y2="622.45" stroke="#00d800" stroke-width="1" />
<line x1="1208.6" y1="619.325" x2="1210.4" y2="619.325" stroke="#00d800" stroke-width="1" />
<line x1="1208.6" y1="616.2" x2="1212.4" y2="616.2" stroke="#00ff00" stroke-width="1.3" />
<line x1="1208.6" y1="613.075" x2="1210.4" y2="613.075" stroke="#00d800" stroke-width="1" />
<line x1="1208.6" y1="609.95" x2="1210.4" y2="609.95" stroke="#00d800" stroke-width="1" />
<line x1="1208.6" y1="606.825" x2="1210.4" y2="606.825" stroke="#00d800" stroke-width="1" />
<line x1="1208.6" y1="603.7" x2="1212.4" y2="603.7" stroke="#00ff00" stroke-width="1.3" />
<line x1="1208.6" y1="600.575" x2="1210.4" y2="600.575" stroke="#00d800" stroke-width="1" />
<line x1="1208.6" y1="597.45" x2="1210.4" y2="597.45" stroke="#00d800" stroke-width="1" />
<line x1="1208.6" y1="594.325" x2="1210.4" y2="594.325" stroke="#00d800" stroke-width="1" />
<line x1="1208.6" y1="591.2" x2="1212.4" y2="591.2" stroke="#00ff00" stroke-width="1.3" />
<line x1="1208.6" y1="588.075" x2="1210.4" y2="588.075" stroke="#00d800" stroke-width="1" />
<line x1="1208.6" y1="584.95" x2="1210.4" y2="584.95" stroke="#00d800" stroke-width="1" />
<line x1="1208.6" y1="581.825" x2="1210.4" y2="581.825" stroke="#00d800" stroke-width="1" />
<line x1="1208.6" y1="578.7" x2="1212.4" y2="578.7" stroke="#00ff00" stroke-width="1.3" />
<line x1="1208.6" y1="575.575" x2="1210.4" y2="575.575" stroke="#00d800" stroke-width="1" />
<line x1="1208.6" y1="572.45" x2="1210.4" y2="572.45" stroke="#00d800" stroke-width="1" />
<line x1="1208.6" y1="569.325" x2="1210.4" y2="569.325" stroke="#00d800" stroke-width="1" />
<line x1="1208.6" y1="566.2" x2="1212.4" y2="566.2" stroke="#00ff00" stroke-width="1.3" />
<line x1="1208.6" y1="563.075" x2="1210.4" y2="563.075" stroke="#00d800" stroke-width="1" />
<line x1="1208.6" y1="559.95" x2="1210.4" y2="559.95" stroke="#00d800" stroke-width="1" />
<line x1="1208.6" y1="556.825" x2="1210.4" y2="556.825" stroke="#00d800" stroke-width="1" />
<line x1="1208.6" y1="553.7" x2="1212.4" y2="553.7" stroke="#00ff00" stroke-width="1.3" />
<line x1="1208.6" y1="550.575" x2="1210.4" y2="550.575" stroke="#00d800" stroke-width="1" />
<line x1="1208.6" y1="547.45" x2="1210.4" y2="547.45" stroke="#00d800" stroke-width="1" />
<line x1="1208.6" y1="544.325" x2="1210.4" y2="544.325" stroke="#00d800" stroke-width="1" />
<line x1="1208.6" y1="541.2" x2="1212.4" y2="541.2" stroke="#00ff00" stroke-width="1.3" />
<line x1="1208.6" y1="538.075" x2="1210.4" y2="538.075" stroke="#00d800" stroke-width="1" />
<line x1="1208.6" y1="534.95" x2="1210.4" y2="534.95" stroke="#00d800" stroke-width="1" />
<line x1="1208.6" y1="531.825" x2="1210.4" y2="531.825" stroke="#00d800" stroke-width="1" />
<line x1="1208.6" y1="528.7" x2="1212.4" y2="528.7" stroke="#00ff00" stroke-width="1.3" />
<line x1="1208.6" y1="525.575" x2="1210.4" y2="525.575" stroke="#00d800" stroke-width="1" />
<line x1="1208.6" y1="522.45" x2="1210.4" y2="522.45" stroke="#00d800" stroke-width="1" />
<line x1="1208.6" y1="519.325" x2="1210.4" y2="519.325" stroke="#00d800" stroke-width="1" />
<line x1="1208.6" y1="516.2" x2="1212.4" y2="516.2" stroke="#00ff00" stroke-width="1.3" />
<line x1="1208.6" y1="513.075" x2="1210.4" y2="513.075" stroke="#00d800" stroke-width="1" />
<line x1="1208.6" y1="509.95000000000005" x2="1210.4" y2="509.95000000000005" stroke="#00d800" stroke-width="1" />
<line x1="1208.6" y1="506.82500000000005" x2="1210.4" y2="506.82500000000005" stroke="#00d800" stroke-width="1" />
<line x1="1208.6" y1="503.70000000000005" x2="1212.4" y2="503.70000000000005" stroke="#00ff00" stroke-width="1.3" />
<line x1="1208.6" y1="500.57500000000005" x2="1210.4" y2="500.57500000000005" stroke="#00d800" stroke-width="1" />
<line x1="1208.6" y1="497.45000000000005" x2="1210.4" y2="497.45000000000005" stroke="#00d800" stroke-width="1" />
<line x1="1208.6" y1="494.32500000000005" x2="1210.4" y2="494.32500000000005" stroke="#00d800" stroke-width="1" />
<line x1="1208.6" y1="491.20000000000005" x2="1212.4" y2="491.20000000000005" stroke="#00ff00" stroke-width="1.3" />
<line x1="1208.6" y1="488.07500000000005" x2="1210.4" y2="488.07500000000005" stroke="#00d800" stroke-width="1" />
<line x1="1208.6" y1="484.95000000000005" x2="1210.4" y2="484.95000000000005" stroke="#00d800" stroke-width="1" />
<line x1="1208.6" y1="481.82500000000005" x2="1210.4" y2="481.82500000000005" stroke="#00d800" stroke-width="1" />
<line x1="1208.6" y1="478.70000000000005" x2="1212.4" y2="478.70000000000005" stroke="#00ff00" stroke-width="1.3" />
<line x1="1208.6" y1="475.57500000000005" x2="1210.4" y2="475.57500000000005" stroke="#00d800" stroke-width="1" />
<line x1="1208.6" y1="472.45000000000005" x2="1210.4" y2="472.45000000000005" stroke="#00d800" stroke-width="1" />
<line x1="1208.6" y1="469.32500000000005" x2="1210.4" y2="469.32500000000005" stroke="#00d800" stroke-width="1" />
<line x1="1208.6" y1="466.20000000000005" x2="1212.4" y2="466.20000000000005" stroke="#00ff00" stroke-width="1.3" />
<line x1="1208.6" y1="463.07500000000005" x2="1210.4" y2="463.07500000000005" stroke="#00d800" stroke-width="1" />
<line x1="1208.6" y1="459.95000000000005" x2="1210.4" y2="459.95000000000005" stroke="#00d800" stroke-width="1" />
<line x1="1208.6" y1="456.82500000000005" x2="1210.4" y2="456.82500000000005" stroke="#00d800" stroke-width="1" />
<line x1="1208.6" y1="453.70000000000005" x2="1212.4" y2="453.70000000000005" stroke="#00ff00" stroke-width="1.3" />
<line x1="100" y1="703.7" x2="1207" y2="703.7" stroke="#dedede" stroke-width="1" stroke-dasharray="1 1" opacity="0.55"/>
<line x1="100" y1="691.2" x2="1207" y2="691.2" stroke="#dedede" stroke-width="1" stroke-dasharray="1 1" opacity="0.53"/>
<line x1="100" y1="678.7" x2="1207" y2="678.7" stroke="#dedede" stroke-width="1" stroke-dasharray="1 1" opacity="0.51"/>
<line x1="100" y1="666.2" x2="1207" y2="666.2" stroke="#dedede" stroke-width="1" stroke-dasharray="1 1" opacity="0.49"/>
<line x1="100" y1="653.7" x2="1207" y2="653.7" stroke="#dedede" stroke-width="1" stroke-dasharray="1 1" opacity="0.47"/>
<line x1="100" y1="641.2" x2="1207" y2="641.2" stroke="#dedede" stroke-width="1" stroke-dasharray="1 1" opacity="0.45"/>
<line x1="100" y1="628.7" x2="1207" y2="628.7" stroke="#dedede" stroke-width="1" stroke-dasharray="1 1" opacity="0.43"/>
<line x1="100" y1="616.2" x2="1207" y2="616.2" stroke="#dedede" stroke-width="1" stroke-dasharray="1 1" opacity="0.41"/>
<line x1="100" y1="603.7" x2="1207" y2="603.7" stroke="#dedede" stroke-width="1" stroke-dasharray="1 1" opacity="0.39"/>
<line x1="100" y1="591.2" x2="1207" y2="591.2" stroke="#dedede" stroke-width="1" stroke-dasharray="1 1" opacity="0.37"/>
<line x1="100" y1="578.7" x2="1207" y2="578.7" stroke="#dedede" stroke-width="1" stroke-dasharray="1 1" opacity="0.35"/>
<line x1="100" y1="566.2" x2="1207" y2="566.2" stroke="#dedede" stroke-width="1" stroke-dasharray="1 1" opacity="0.33"/>
<line x1="100" y1="553.7" x2="1207" y2="553.7" stroke="#dedede" stroke-width="1" stroke-dasharray="1 1" opacity="0.31"/>
<line x1="100" y1="541.2" x2="1207" y2="541.2" stroke="#dedede" stroke-width="1" stroke-dasharray="1 1" opacity="0.29"/>
<line x1="100" y1="528.7" x2="1207" y2="528.7" stroke="#dedede" stroke-width="1" stroke-dasharray="1 1" opacity="0.27"/>
<line x1="100" y1="516.2" x2="1207" y2="516.2" stroke="#dedede" stroke-width="1" stroke-dasharray="1 1" opacity="0.25"/>
<line x1="100" y1="503.70000000000005" x2="1207" y2="503.70000000000005" stroke="#dedede" stroke-width="1" stroke-dasharray="1 1" opacity="0.23"/>
<line x1="100" y1="491.20000000000005" x2="1207" y2="491.20000000000005" stroke="#dedede" stroke-width="1" stroke-dasharray="1 1" opacity="0.21"/>
<line x1="100" y1="478.70000000000005" x2="1207" y2="478.70000000000005" stroke="#dedede" stroke-width="1" stroke-dasharray="1 1" opacity="0.19"/>
<line x1="100" y1="466.20000000000005" x2="1207" y2="466.20000000000005" stroke="#dedede" stroke-width="1" stroke-dasharray="1 1" opacity="0.17"/>
<line x1="100" y1="453.70000000000005" x2="1207" y2="453.70000000000005" stroke="#dedede" stroke-width="1" stroke-dasharray="1 1" opacity="0.15"/>
<line x1="188" y1="451" x2="188" y2="706" stroke="url(#gv3)" stroke-width="1" stroke-dasharray="1 1"/>
<line x1="280" y1="451" x2="280" y2="706" stroke="url(#gv3)" stroke-width="1" stroke-dasharray="1 1"/>
<line x1="372" y1="451" x2="372" y2="706" stroke="url(#gv3)" stroke-width="1" stroke-dasharray="1 1"/>
<line x1="464" y1="451" x2="464" y2="706" stroke="url(#gv3)" stroke-width="1" stroke-dasharray="1 1"/>
<line x1="556" y1="451" x2="556" y2="706" stroke="url(#gv3)" stroke-width="1" stroke-dasharray="1 1"/>
<line x1="648" y1="451" x2="648" y2="706" stroke="url(#gv3)" stroke-width="1" stroke-dasharray="1 1"/>
<line x1="740" y1="451" x2="740" y2="706" stroke="url(#gv3)" stroke-width="1" stroke-dasharray="1 1"/>
<line x1="832" y1="451" x2="832" y2="706" stroke="url(#gv3)" stroke-width="1" stroke-dasharray="1 1"/>
<line x1="924" y1="451" x2="924" y2="706" stroke="url(#gv3)" stroke-width="1" stroke-dasharray="1 1"/>
<line x1="1016" y1="451" x2="1016" y2="706" stroke="url(#gv3)" stroke-width="1" stroke-dasharray="1 1"/>
<line x1="1108" y1="451" x2="1108" y2="706" stroke="url(#gv3)" stroke-width="1" stroke-dasharray="1 1"/>
<line x1="1200" y1="451" x2="1200" y2="706" stroke="url(#gv3)" stroke-width="1" stroke-dasharray="1 1"/>
<line x1="976" y1="451" x2="976" y2="706" stroke="url(#gv3)" stroke-width="1" stroke-dasharray="1 1"/>
<g font-family="'Liberation Sans', sans-serif" font-size="8.3" letter-spacing="-0.2">
<text x="188" y="720.8" fill="#ffff00" font-size="8.3" text-anchor="middle" >02</text>
<text x="280" y="720.8" fill="#ffff00" font-size="8.3" text-anchor="middle" >04</text>
<text x="372" y="720.8" fill="#ffff00" font-size="8.3" text-anchor="middle" >06</text>
<text x="464" y="720.8" fill="#ffff00" font-size="8.3" text-anchor="middle" >08</text>
<text x="556" y="720.8" fill="#ffff00" font-size="8.3" text-anchor="middle" >10</text>
<text x="648" y="720.8" fill="#ffff00" font-size="8.3" text-anchor="middle" >12</text>
<text x="740" y="720.8" fill="#ffff00" font-size="8.3" text-anchor="middle" >14</text>
<text x="832" y="720.8" fill="#ffff00" font-size="8.3" text-anchor="middle" >16</text>
<text x="924" y="720.8" fill="#ffff00" font-size="8.3" text-anchor="middle" >18</text>
<text x="1016" y="720.8" fill="#ffff00" font-size="8.3" text-anchor="middle" >20</text>
<text x="1108" y="720.8" fill="#ffff00" font-size="8.3" text-anchor="middle" >22</text>
<text x="1200" y="720.8" fill="#ffff00" font-size="8.3" text-anchor="middle" >00</text>
<text x="963" y="720.8" fill="#ffff00" textLength="26.5" lengthAdjust="spacingAndGlyphs">Sun Set</text>
</g>
<line x1="119" y1="709" x2="119" y2="711" stroke="#3c483c" stroke-width="1" />
<line x1="142" y1="709" x2="142" y2="711" stroke="#3c483c" stroke-width="1" />
<line x1="165" y1="709" x2="165" y2="711" stroke="#3c483c" stroke-width="1" />
<line x1="188" y1="709" x2="188" y2="713.5" stroke="#5c6c5c" stroke-width="1" />
<line x1="211" y1="709" x2="211" y2="711" stroke="#3c483c" stroke-width="1" />
<line x1="234" y1="709" x2="234" y2="711" stroke="#3c483c" stroke-width="1" />
<line x1="257" y1="709" x2="257" y2="711" stroke="#3c483c" stroke-width="1" />
<line x1="280" y1="709" x2="280" y2="713.5" stroke="#5c6c5c" stroke-width="1" />
<line x1="303" y1="709" x2="303" y2="711" stroke="#3c483c" stroke-width="1" />
<line x1="326" y1="709" x2="326" y2="711" stroke="#3c483c" stroke-width="1" />
<line x1="349" y1="709" x2="349" y2="711" stroke="#3c483c" stroke-width="1" />
<line x1="372" y1="709" x2="372" y2="713.5" stroke="#5c6c5c" stroke-width="1" />
<line x1="395" y1="709" x2="395" y2="711" stroke="#3c483c" stroke-width="1" />
<line x1="418" y1="709" x2="418" y2="711" stroke="#3c483c" stroke-width="1" />
<line x1="441" y1="709" x2="441" y2="711" stroke="#3c483c" stroke-width="1" />
<line x1="464" y1="709" x2="464" y2="713.5" stroke="#5c6c5c" stroke-width="1" />
<line x1="487" y1="709" x2="487" y2="711" stroke="#3c483c" stroke-width="1" />
<line x1="510" y1="709" x2="510" y2="711" stroke="#3c483c" stroke-width="1" />
<line x1="533" y1="709" x2="533" y2="711" stroke="#3c483c" stroke-width="1" />
<line x1="556" y1="709" x2="556" y2="713.5" stroke="#5c6c5c" stroke-width="1" />
<line x1="579" y1="709" x2="579" y2="711" stroke="#3c483c" stroke-width="1" />
<line x1="602" y1="709" x2="602" y2="711" stroke="#3c483c" stroke-width="1" />
<line x1="625" y1="709" x2="625" y2="711" stroke="#3c483c" stroke-width="1" />
<line x1="648" y1="709" x2="648" y2="713.5" stroke="#5c6c5c" stroke-width="1" />
<line x1="671" y1="709" x2="671" y2="711" stroke="#3c483c" stroke-width="1" />
<line x1="694" y1="709" x2="694" y2="711" stroke="#3c483c" stroke-width="1" />
<line x1="717" y1="709" x2="717" y2="711" stroke="#3c483c" stroke-width="1" />
<line x1="740" y1="709" x2="740" y2="713.5" stroke="#5c6c5c" stroke-width="1" />
<line x1="763" y1="709" x2="763" y2="711" stroke="#3c483c" stroke-width="1" />
<line x1="786" y1="709" x2="786" y2="711" stroke="#3c483c" stroke-width="1" />
<line x1="809" y1="709" x2="809" y2="711" stroke="#3c483c" stroke-width="1" />
<line x1="832" y1="709" x2="832" y2="713.5" stroke="#5c6c5c" stroke-width="1" />
<line x1="855" y1="709" x2="855" y2="711" stroke="#3c483c" stroke-width="1" />
<line x1="878" y1="709" x2="878" y2="711" stroke="#3c483c" stroke-width="1" />
<line x1="901" y1="709" x2="901" y2="711" stroke="#3c483c" stroke-width="1" />
<line x1="924" y1="709" x2="924" y2="713.5" stroke="#5c6c5c" stroke-width="1" />
<line x1="947" y1="709" x2="947" y2="711" stroke="#3c483c" stroke-width="1" />
<line x1="970" y1="709" x2="970" y2="711" stroke="#3c483c" stroke-width="1" />
<line x1="993" y1="709" x2="993" y2="711" stroke="#3c483c" stroke-width="1" />
<line x1="1016" y1="709" x2="1016" y2="713.5" stroke="#5c6c5c" stroke-width="1" />
<line x1="1039" y1="709" x2="1039" y2="711" stroke="#3c483c" stroke-width="1" />
<line x1="1062" y1="709" x2="1062" y2="711" stroke="#3c483c" stroke-width="1" />
<line x1="1085" y1="709" x2="1085" y2="711" stroke="#3c483c" stroke-width="1" />
<line x1="1108" y1="709" x2="1108" y2="713.5" stroke="#5c6c5c" stroke-width="1" />
<line x1="1131" y1="709" x2="1131" y2="711" stroke="#3c483c" stroke-width="1" />
<line x1="1154" y1="709" x2="1154" y2="711" stroke="#3c483c" stroke-width="1" />
<line x1="1177" y1="709" x2="1177" y2="711" stroke="#3c483c" stroke-width="1" />
<line x1="1200" y1="709" x2="1200" y2="713.5" stroke="#5c6c5c" stroke-width="1" />
<polyline points="100.7,483.0 120.8,483.0 122.7,486.0 127.5,486.0 129.6,483.0 132.8,483.0 135.0,486.0 206.5,486.0 209.2,487.8 223.9,487.8 226.6,486.0 227.9,487.8 229.8,486.0 249.3,486.0 252.0,483.0 290.9,483.0 293.0,481.2 300.2,481.2 302.9,483.0 305.6,483.0 307.5,481.2 317.6,481.2 320.3,483.0 355.1,483.0 357.3,481.2 368.5,481.2 370.0,481.2 390.1,481.2 392.0,478.5 394.1,481.2 415.5,481.2 418.2,478.5 420.9,481.2 450.3,481.2 452.5,478.5 455.7,478.5 457.8,481.2 459.7,478.5 469.1,478.5 471.2,481.2 473.1,478.5 493.2,478.5 495.3,481.2 498.5,481.2 500.7,478.5 509.3,478.5 511.9,481.2 533.4,481.2 537.4,483.0 560.1,483.0 562.8,485.7 574.9,485.7 577.6,487.8 585.6,487.8 589.6,491.1 595.0,493.2 599.0,493.2 600.9,495.9 603.0,493.2 607.0,497.8 611.0,500.7 644.5,500.7 647.2,502.6 649.9,503.1 650.0,503.1 659.4,503.1 663.4,512.0 666.1,513.3 684.8,513.3 687.5,516.0 696.9,516.5 699.5,517.8 706.2,518.6 708.9,520.8 712.9,518.6 717.0,521.3 730.3,521.3 733.0,522.7 737.0,520.8 743.7,525.3 747.8,523.2 754.4,523.2 757.1,521.3 765.2,520.8 767.8,517.8 773.2,516.8 777.2,515.2 780.7,513.3 783.9,516.0 791.9,517.3 797.3,518.6 800.0,521.3 808.0,521.3 810.7,518.6 817.4,521.3 824.1,523.2 829.4,521.3 833.4,518.6 837.5,516.5 842.8,517.8 848.2,517.3 853.5,513.3 858.9,516.0 865.6,516.0 868.3,513.3 879.0,513.3 883.0,510.6 888.4,510.6 891.0,507.9 907.1,507.9 911.1,506.1 915.1,506.1 917.8,503.1 928.5,503.1 930.0,501.2 951.4,501.2 953.6,497.8 974.2,497.8 976.9,495.9 1015.7,495.9 1018.4,493.2 1050.5,493.2 1053.2,491.1 1076.0,491.1 1077.8,487.8 1141.6,487.8 1144.2,486.0 1165.7,486.0 1168.4,483.0 1188.4,483.0 1191.1,481.2 1204.5,481.2" fill="none" stroke="#8888fa" stroke-width="1.35" stroke-linejoin="round" />
<polyline points="100.7,597.1 106.1,597.7 124.8,598.5 130.2,597.7 151.6,597.9 154.3,599.0 167.7,599.0 170.3,600.1 185.1,600.1 187.8,601.1 210.5,601.9 213.2,603.0 229.3,603.0 233.3,604.3 249.3,605.1 253.4,607.3 280.1,607.3 283.4,610.8 317.6,610.8 320.3,611.8 357.8,611.8 360.5,611.0 368.5,611.0 370.0,611.0 378.0,611.8 434.3,612.1 447.7,614.0 471.8,614.0 477.1,615.1 481.1,614.0 503.9,614.0 509.3,612.1 528.0,611.8 544.1,608.9 557.5,607.0 573.5,605.1 592.3,603.0 605.7,599.8 621.7,597.7 637.8,595.0 648.5,592.3 650.0,591.8 660.7,584.3 666.1,583.7 684.8,583.7 695.5,581.6 714.3,580.0 730.3,580.0 741.1,578.9 751.8,580.2 762.5,581.6 781.2,581.6 787.9,579.7 800.0,578.9 808.0,579.7 818.7,576.8 826.8,577.8 842.8,577.8 850.9,579.7 864.2,578.9 880.3,580.2 896.4,582.1 909.8,583.7 923.2,584.8 928.5,584.8 930.0,584.8 940.7,584.8 946.1,585.9 956.8,586.9 975.5,586.9 983.6,589.1 1026.4,589.1 1031.8,589.9 1047.8,590.2 1054.5,591.8 1125.5,591.8 1130.9,592.8 1141.6,593.6 1165.7,595.0 1176.4,596.3 1187.1,597.1 1195.1,598.2 1204.5,598.2" fill="none" stroke="#20d820" stroke-width="1.8" stroke-linejoin="round" />
<polyline points="100.7,611.0 119.5,611.0 126.2,613.2 130.2,611.0 134.2,612.1 151.6,612.1 159.6,613.7 181.1,614.0 186.4,615.6 205.2,616.1 210.5,617.7 223.9,618.5 227.1,617.2 229.3,618.5 233.3,619.1 249.3,619.1 253.4,621.0 280.1,621.0 283.4,623.6 290.9,623.1 298.9,622.8 305.6,624.4 307.5,622.6 317.6,623.1 323.0,625.0 331.0,626.0 341.7,626.0 347.1,625.0 355.1,624.4 360.5,623.1 368.5,623.4 370.0,623.1 394.1,623.6 399.5,625.0 412.8,625.0 417.7,622.8 423.6,624.4 447.7,625.0 450.3,626.0 455.7,625.0 467.8,625.0 471.2,627.1 477.1,625.8 490.5,625.8 495.9,626.6 506.6,623.9 511.9,625.0 528.0,625.0 532.0,623.1 544.1,622.8 557.5,620.4 568.2,621.0 581.6,619.6 592.3,620.4 600.3,619.1 603.0,618.3 608.4,619.9 619.1,619.9 632.5,617.7 645.8,615.1 648.5,614.3 650.0,613.7 659.4,609.7 663.4,611.6 682.1,611.8 698.2,612.4 711.6,611.8 730.3,612.4 735.7,613.2 743.7,614.5 747.8,613.2 757.1,613.7 770.5,612.6 781.2,610.5 800.0,610.5 808.0,611.6 818.7,609.7 826.8,610.5 837.5,607.6 845.5,608.9 856.2,607.6 877.6,607.8 891.0,607.8 917.8,607.0 928.5,607.0 930.0,607.0 948.7,607.3 954.1,605.7 958.1,607.0 974.2,607.0 977.7,606.2 983.6,607.6 1018.4,607.3 1023.7,606.5 1037.1,607.6 1050.5,608.4 1055.9,607.6 1069.3,608.9 1080.0,607.8 1104.1,607.8 1109.4,606.8 1117.5,607.8 1138.9,608.4 1144.2,607.6 1152.3,607.8 1165.7,609.7 1171.0,608.6 1181.7,608.9 1187.1,610.0 1192.5,609.2 1204.5,610.2" fill="none" stroke="#d820d8" stroke-width="1.8" stroke-linejoin="round" />
<rect x="99" y="703" width="1108" height="2" fill="#ff0000" />
<text x="448" y="679.8" fill="#f080e8" font-family="'Liberation Sans', sans-serif" font-size="10" textLength="41.6" lengthAdjust="spacingAndGlyphs">Sun Rise</text>
<line x1="467" y1="681" x2="467" y2="708.3" stroke="#ff80f0" stroke-width="2" stroke-dasharray="1.3 1"/>
<line x1="976" y1="681" x2="976" y2="708.3" stroke="#ff80f0" stroke-width="2" stroke-dasharray="1.3 1"/>
<rect x="97" y="706.8" width="1112" height="1.6" fill="#c4c4c4" />
<rect x="97" y="450" width="2.4" height="258.5" fill="#ffffff" />
<rect x="1207" y="450" width="2.1" height="258.5" fill="#ffffff" />
<rect x="97" y="450" width="1112" height="1" fill="#f0f0f0" />
<line x1="467" y1="702" x2="467" y2="708.3" stroke="#ff80f0" stroke-width="2" stroke-dasharray="1.3 1"/>
<line x1="976" y1="702" x2="976" y2="708.3" stroke="#ff80f0" stroke-width="2" stroke-dasharray="1.3 1"/>
</svg></body></html>
